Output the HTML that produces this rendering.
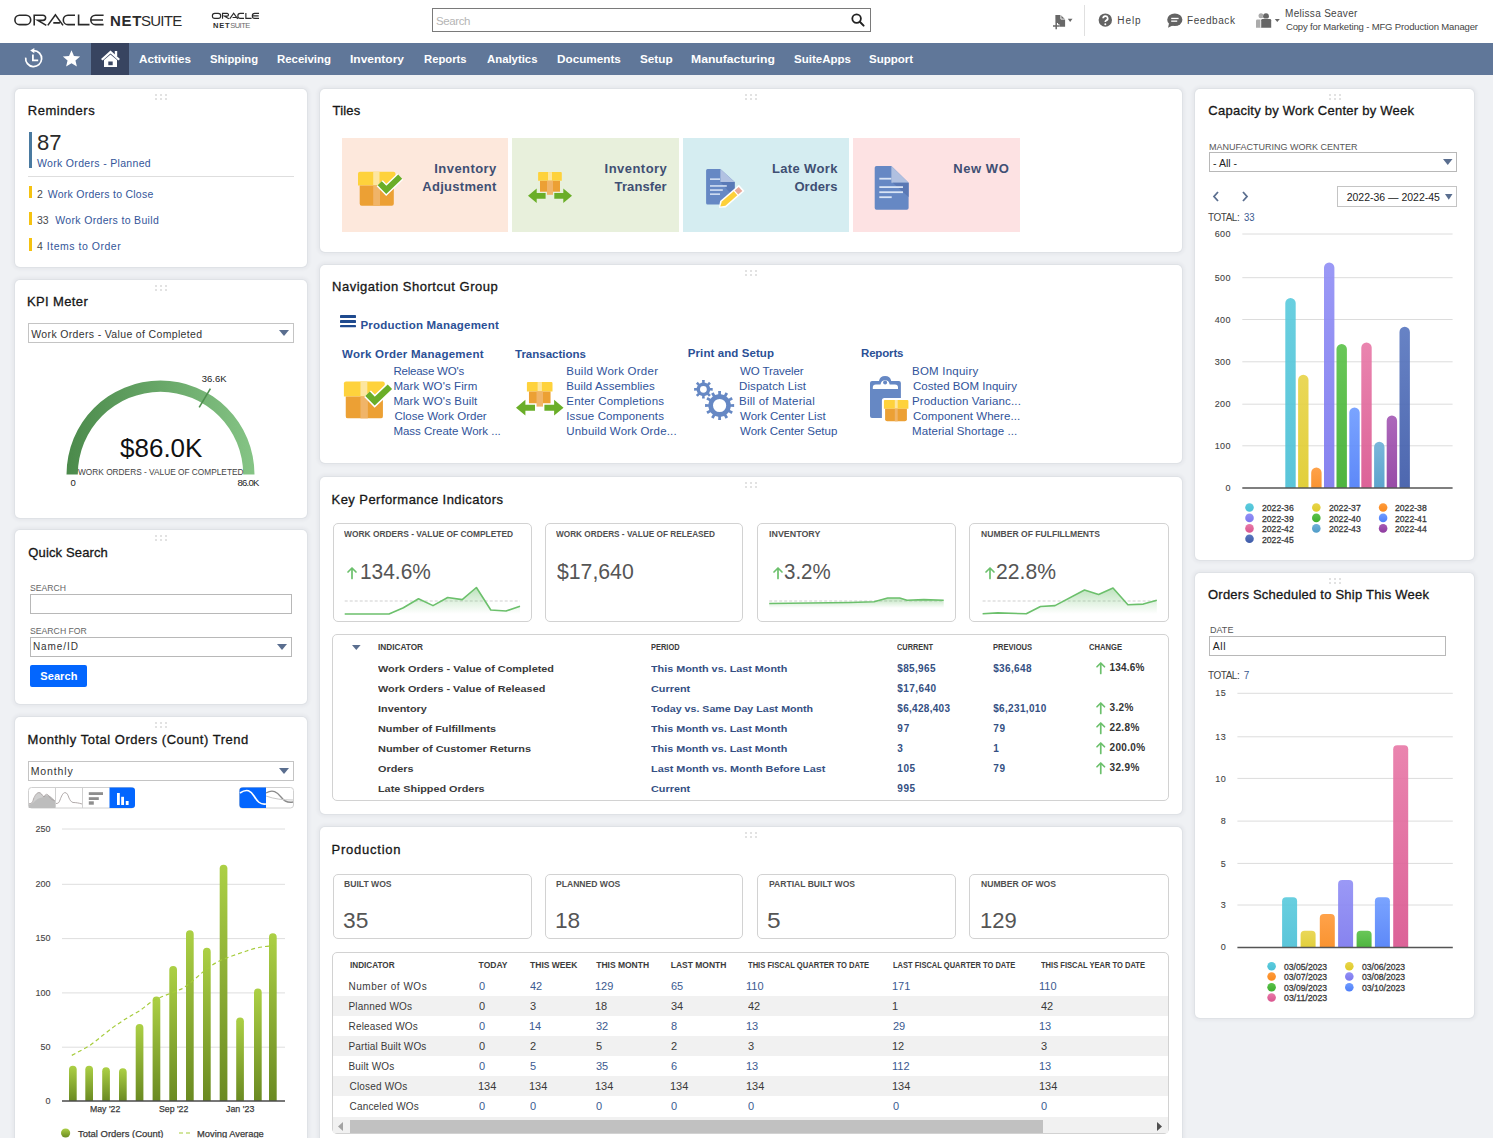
<!DOCTYPE html>
<html><head><meta charset="utf-8"><title>NetSuite Dashboard</title>
<style>
html,body{margin:0;padding:0;}
body{width:1493px;height:1138px;overflow:hidden;position:relative;background:#eff1f4;font-family:"Liberation Sans",sans-serif;}
.t{position:absolute;white-space:pre;line-height:1;}
.p{position:absolute;background:#fff;border-radius:5px;box-shadow:0 0 0 1px rgba(40,50,70,0.035),0 0 3px 3px rgba(40,50,70,0.04);}
.dot{position:absolute;width:2px;height:2px;background:#e2e2e2;}
svg{position:absolute;overflow:visible;}

</style></head><body>
<div style="position:absolute;left:0px;top:0px;width:1493px;height:43px;background:#fff"></div>
<svg style="left:0;top:0" width="300" height="43" viewBox="0 0 300 43"><path d="M19.6 15.2 H26 A4.7 4.7 0 0 1 26 24.6 H19.6 A4.7 4.7 0 0 1 19.6 15.2z M34.2 25.4 V15.2 H43 A2.6 2.6 0 0 1 43 20.4 H37.8 L46.3 25.4 M47.8 25.4 L55.4 14.9 L63 25.4 M53.3 22.9 H59.9 M75 15.2 H68 A4.7 4.7 0 0 0 68 24.6 H75 M78.6 14.4 V24.6 H89.5 M103.6 15.2 H95.5 A4.7 4.7 0 0 0 95.5 24.6 H103.6 M91.5 20 H103" fill="none" stroke="#2a2a2a" stroke-width="1.6"/><g transform="translate(212,13) scale(0.526) translate(-14.2,-14.4)"><path d="M19.6 15.2 H26 A4.7 4.7 0 0 1 26 24.6 H19.6 A4.7 4.7 0 0 1 19.6 15.2z M34.2 25.4 V15.2 H43 A2.6 2.6 0 0 1 43 20.4 H37.8 L46.3 25.4 M47.8 25.4 L55.4 14.9 L63 25.4 M53.3 22.9 H59.9 M75 15.2 H68 A4.7 4.7 0 0 0 68 24.6 H75 M78.6 14.4 V24.6 H89.5 M103.6 15.2 H95.5 A4.7 4.7 0 0 0 95.5 24.6 H103.6 M91.5 20 H103" fill="none" stroke="#2a2a2a" stroke-width="2.2"/></g></svg>
<div class="t" style="left:110.00px;top:13.30px;font-size:15px;font-weight:700;color:#2b2b2b;letter-spacing:0.750px;font-family:'Liberation Sans',sans-serif;">NET</div>
<div class="t" style="left:141.00px;top:13.30px;font-size:15px;font-weight:400;color:#2b2b2b;letter-spacing:-0.750px;font-family:'Liberation Sans',sans-serif;">SUITE</div>
<div class="t" style="left:213.00px;top:22.15px;font-size:7.5px;font-weight:700;color:#2e2e2e;letter-spacing:0.750px;font-family:'Liberation Sans',sans-serif;">NET</div>
<div class="t" style="left:230.20px;top:22.15px;font-size:7.5px;font-weight:400;color:#6a6a6a;letter-spacing:-0.500px;font-family:'Liberation Sans',sans-serif;">SUITE</div>
<div style="position:absolute;left:432px;top:8px;width:439px;height:24px;border:1px solid #7a7a7a;box-sizing:border-box;background:#fff"></div>
<div class="t" style="left:436.00px;top:15.77px;font-size:11.5px;font-weight:400;color:#b5b5b5;letter-spacing:-0.400px;font-family:'Liberation Sans',sans-serif;">Search</div>
<svg style="left:851px;top:13px" width="14" height="14" viewBox="0 0 14 14"><circle cx="5.6" cy="5.6" r="4.3" fill="none" stroke="#222" stroke-width="1.8"/><line x1="8.8" y1="8.8" x2="12.6" y2="12.6" stroke="#222" stroke-width="2" stroke-linecap="round"/></svg>
<svg style="left:1050px;top:12px" width="26" height="20" viewBox="1050 12 26 20"><path d="M1055.4 15 H1060.7 L1065.1 19.3 V26.8 H1055.4z" fill="#686868"/><path d="M1060.9 14.5 V19.1 H1065.6" fill="none" stroke="#fff" stroke-width="0.9"/><path d="M1053 26.1 H1059.4 M1056.2 23 V29.2" stroke="#fff" stroke-width="3.6"/><path d="M1053 26.1 H1059.4 M1056.2 23 V29.2" stroke="#686868" stroke-width="1.5"/><path d="M1067.8 18.7 H1072.5 L1070.15 22.1z" fill="#686868"/></svg>
<div style="position:absolute;left:1084px;top:5px;width:1px;height:31px;background:#e0e0e0"></div>
<svg style="left:1098px;top:13px" width="15" height="15" viewBox="0 0 15 15"><circle cx="7.3" cy="7.1" r="6.7" fill="#636363"/><path d="M5.1 5.3 A2.3 2.2 0 1 1 8.2 7.4 C7.4 7.8 7.3 8.2 7.3 9.1" fill="none" stroke="#fff" stroke-width="1.7"/><circle cx="7.3" cy="11.2" r="1" fill="#fff"/></svg>
<div class="t" style="left:1117.30px;top:16.04px;font-size:10px;font-weight:400;color:#454545;letter-spacing:0.933px;font-family:'Liberation Sans',sans-serif;">Help</div>
<svg style="left:1166px;top:13px" width="18" height="16" viewBox="0 0 18 16"><ellipse cx="8.8" cy="6.8" rx="7.6" ry="6.3" fill="#636363"/><path d="M3 10.5 L2 14.8 L7 12.2z" fill="#636363"/><rect x="5.2" y="4.8" width="7.4" height="1.3" fill="#fff"/><rect x="5.2" y="7.5" width="6" height="1.3" fill="#fff"/></svg>
<div class="t" style="left:1187.00px;top:16.04px;font-size:10px;font-weight:400;color:#454545;letter-spacing:0.571px;font-family:'Liberation Sans',sans-serif;">Feedback</div>
<svg style="left:1250px;top:5px" width="32" height="26" viewBox="1250 5 32 26"><circle cx="1261" cy="15.8" r="2.5" fill="#ababab"/><path d="M1256 27.8 V20.8 A1.4 1.4 0 0 1 1257.4 19.4 H1262 V27.8z" fill="#ababab"/><circle cx="1266" cy="16.2" r="3.1" fill="#fff"/><circle cx="1266" cy="16.2" r="2.9" fill="#666"/><path d="M1260.4 27.8 V20 A1.4 1.4 0 0 1 1261.8 18.6 H1270.6 A1.4 1.4 0 0 1 1272 20 V27.8z" fill="#fff"/><path d="M1261.2 27.8 V20.3 A1.2 1.2 0 0 1 1262.4 19.1 H1270 A1.2 1.2 0 0 1 1271.2 20.3 V27.8z" fill="#666"/><path d="M1274.8 19 H1279.8 L1277.3 22z" fill="#666"/></svg>
<div class="t" style="left:1285.00px;top:9.04px;font-size:10px;font-weight:400;color:#454545;letter-spacing:0.308px;font-family:'Liberation Sans',sans-serif;">Melissa Seaver</div>
<div class="t" style="left:1286.00px;top:22.26px;font-size:9.5px;font-weight:400;color:#454545;letter-spacing:-0.143px;font-family:'Liberation Sans',sans-serif;">Copy for Marketing - MFG Production Manager</div>
<div style="position:absolute;left:0px;top:43px;width:1493px;height:32px;background:#607799"></div>
<div style="position:absolute;left:91px;top:43px;width:38px;height:32px;background:#384460"></div>
<svg style="left:24px;top:47px" width="20" height="22" viewBox="0 0 20 22"><path d="M9.8 3.6 A8 8 0 1 1 1.7 10.6" fill="none" stroke="#fff" stroke-width="1.7"/><path d="M6.2 3.6 L10.3 0.9 V6.3z" fill="#fff"/><path d="M8.9 7.6 V13.3 H14.2" fill="none" stroke="#fff" stroke-width="1.8"/></svg>
<svg style="left:61.5px;top:49.3px" width="19" height="19" viewBox="0 0 24 24"><path d="M12 1.5l3.1 7.2 7.8.7-5.9 5.1 1.8 7.6L12 18.1 5.2 22.1 7 14.5 1.1 9.4l7.8-.7z" fill="#fff"/></svg>
<svg style="left:100px;top:49px" width="21" height="19" viewBox="0 0 21 19"><path d="M10.5 1.5 L1 10 L2.6 11.6 L10.5 4.6 L18.4 11.6 L20 10z" fill="#fff"/><path d="M4 11 L10.5 5.5 L17 11 V18 H4z" fill="#fff"/><rect x="8.3" y="12.5" width="4.4" height="3.7" fill="#384460"/><rect x="14.8" y="2" width="2.4" height="5" fill="#fff"/></svg>
<div class="t" style="left:139.00px;top:54.19px;font-size:11px;font-weight:700;color:#fff;letter-spacing:0.000px;font-family:'Liberation Sans',sans-serif;transform:scaleX(1.0612);transform-origin:0 0;">Activities</div>
<div class="t" style="left:210.00px;top:54.19px;font-size:11px;font-weight:700;color:#fff;letter-spacing:0.000px;font-family:'Liberation Sans',sans-serif;transform:scaleX(1.0213);transform-origin:0 0;">Shipping</div>
<div class="t" style="left:277.00px;top:54.19px;font-size:11px;font-weight:700;color:#fff;letter-spacing:0.000px;font-family:'Liberation Sans',sans-serif;transform:scaleX(1.0385);transform-origin:0 0;">Receiving</div>
<div class="t" style="left:350.00px;top:54.19px;font-size:11px;font-weight:700;color:#fff;letter-spacing:0.000px;font-family:'Liberation Sans',sans-serif;transform:scaleX(1.0900);transform-origin:0 0;">Inventory</div>
<div class="t" style="left:424.00px;top:54.19px;font-size:11px;font-weight:700;color:#fff;letter-spacing:0.000px;font-family:'Liberation Sans',sans-serif;transform:scaleX(1.0238);transform-origin:0 0;">Reports</div>
<div class="t" style="left:487.00px;top:54.19px;font-size:11px;font-weight:700;color:#fff;letter-spacing:0.000px;font-family:'Liberation Sans',sans-serif;transform:scaleX(1.0327);transform-origin:0 0;">Analytics</div>
<div class="t" style="left:557.00px;top:54.19px;font-size:11px;font-weight:700;color:#fff;letter-spacing:0.000px;font-family:'Liberation Sans',sans-serif;transform:scaleX(1.0667);transform-origin:0 0;">Documents</div>
<div class="t" style="left:640.00px;top:54.19px;font-size:11px;font-weight:700;color:#fff;letter-spacing:0.000px;font-family:'Liberation Sans',sans-serif;transform:scaleX(1.0667);transform-origin:0 0;">Setup</div>
<div class="t" style="left:691.00px;top:54.19px;font-size:11px;font-weight:700;color:#fff;letter-spacing:0.000px;font-family:'Liberation Sans',sans-serif;transform:scaleX(1.1067);transform-origin:0 0;">Manufacturing</div>
<div class="t" style="left:793.50px;top:54.19px;font-size:11px;font-weight:700;color:#fff;letter-spacing:0.000px;font-family:'Liberation Sans',sans-serif;transform:scaleX(1.0463);transform-origin:0 0;">SuiteApps</div>
<div class="t" style="left:869.00px;top:54.19px;font-size:11px;font-weight:700;color:#fff;letter-spacing:0.000px;font-family:'Liberation Sans',sans-serif;transform:scaleX(1.0476);transform-origin:0 0;">Support</div>
<div class="p" style="left:15px;top:89px;width:292px;height:178px"></div>
<div class="dot" style="left:155.0px;top:94.0px"></div>
<div class="dot" style="left:155.0px;top:97.5px"></div>
<div class="dot" style="left:160.0px;top:94.0px"></div>
<div class="dot" style="left:160.0px;top:97.5px"></div>
<div class="dot" style="left:165.0px;top:94.0px"></div>
<div class="dot" style="left:165.0px;top:97.5px"></div>
<div class="p" style="left:15px;top:280px;width:292px;height:238px"></div>
<div class="dot" style="left:155.0px;top:285.0px"></div>
<div class="dot" style="left:155.0px;top:288.5px"></div>
<div class="dot" style="left:160.0px;top:285.0px"></div>
<div class="dot" style="left:160.0px;top:288.5px"></div>
<div class="dot" style="left:165.0px;top:285.0px"></div>
<div class="dot" style="left:165.0px;top:288.5px"></div>
<div class="p" style="left:15px;top:530px;width:292px;height:174px"></div>
<div class="dot" style="left:155.0px;top:535.0px"></div>
<div class="dot" style="left:155.0px;top:538.5px"></div>
<div class="dot" style="left:160.0px;top:535.0px"></div>
<div class="dot" style="left:160.0px;top:538.5px"></div>
<div class="dot" style="left:165.0px;top:535.0px"></div>
<div class="dot" style="left:165.0px;top:538.5px"></div>
<div class="p" style="left:15px;top:717px;width:292px;height:443px"></div>
<div class="dot" style="left:155.0px;top:722.0px"></div>
<div class="dot" style="left:155.0px;top:725.5px"></div>
<div class="dot" style="left:160.0px;top:722.0px"></div>
<div class="dot" style="left:160.0px;top:725.5px"></div>
<div class="dot" style="left:165.0px;top:722.0px"></div>
<div class="dot" style="left:165.0px;top:725.5px"></div>
<div class="p" style="left:320px;top:89px;width:862px;height:163px"></div>
<div class="dot" style="left:745.0px;top:94.0px"></div>
<div class="dot" style="left:745.0px;top:97.5px"></div>
<div class="dot" style="left:750.0px;top:94.0px"></div>
<div class="dot" style="left:750.0px;top:97.5px"></div>
<div class="dot" style="left:755.0px;top:94.0px"></div>
<div class="dot" style="left:755.0px;top:97.5px"></div>
<div class="p" style="left:320px;top:265px;width:862px;height:198px"></div>
<div class="dot" style="left:745.0px;top:270.0px"></div>
<div class="dot" style="left:745.0px;top:273.5px"></div>
<div class="dot" style="left:750.0px;top:270.0px"></div>
<div class="dot" style="left:750.0px;top:273.5px"></div>
<div class="dot" style="left:755.0px;top:270.0px"></div>
<div class="dot" style="left:755.0px;top:273.5px"></div>
<div class="p" style="left:320px;top:477px;width:862px;height:337px"></div>
<div class="dot" style="left:745.0px;top:482.0px"></div>
<div class="dot" style="left:745.0px;top:485.5px"></div>
<div class="dot" style="left:750.0px;top:482.0px"></div>
<div class="dot" style="left:750.0px;top:485.5px"></div>
<div class="dot" style="left:755.0px;top:482.0px"></div>
<div class="dot" style="left:755.0px;top:485.5px"></div>
<div class="p" style="left:320px;top:827px;width:862px;height:333px"></div>
<div class="dot" style="left:745.0px;top:832.0px"></div>
<div class="dot" style="left:745.0px;top:835.5px"></div>
<div class="dot" style="left:750.0px;top:832.0px"></div>
<div class="dot" style="left:750.0px;top:835.5px"></div>
<div class="dot" style="left:755.0px;top:832.0px"></div>
<div class="dot" style="left:755.0px;top:835.5px"></div>
<div class="p" style="left:1195px;top:89px;width:279px;height:471px"></div>
<div class="dot" style="left:1328.5px;top:94.0px"></div>
<div class="dot" style="left:1328.5px;top:97.5px"></div>
<div class="dot" style="left:1333.5px;top:94.0px"></div>
<div class="dot" style="left:1333.5px;top:97.5px"></div>
<div class="dot" style="left:1338.5px;top:94.0px"></div>
<div class="dot" style="left:1338.5px;top:97.5px"></div>
<div class="p" style="left:1195px;top:573px;width:279px;height:445px"></div>
<div class="dot" style="left:1328.5px;top:578.0px"></div>
<div class="dot" style="left:1328.5px;top:581.5px"></div>
<div class="dot" style="left:1333.5px;top:578.0px"></div>
<div class="dot" style="left:1333.5px;top:581.5px"></div>
<div class="dot" style="left:1338.5px;top:578.0px"></div>
<div class="dot" style="left:1338.5px;top:581.5px"></div>
<div class="t" style="left:27.80px;top:103.80px;font-size:13px;font-weight:400;color:#161616;letter-spacing:0.500px;font-family:'Liberation Sans',sans-serif;-webkit-text-stroke:0.3px #161616;">Reminders</div>
<div style="position:absolute;left:29px;top:132px;width:3px;height:36px;background:#4a7aa0"></div>
<div class="t" style="left:36.57px;top:132.90px;font-size:21.5px;font-weight:400;color:#2a2a2a;letter-spacing:0.000px;font-family:'Liberation Sans',sans-serif;transform:scaleX(1.0273);transform-origin:0 0;">87</div>
<div class="t" style="left:37.00px;top:158.31px;font-size:10.5px;font-weight:400;color:#33569a;letter-spacing:0.325px;font-family:'Liberation Sans',sans-serif;">Work Orders - Planned</div>
<div style="position:absolute;left:28px;top:176px;width:266px;height:1px;background:#dedede"></div>
<div style="position:absolute;left:29px;top:186px;width:3px;height:12px;background:#f5c211"></div>
<div class="t" style="left:37.00px;top:188.91px;font-size:10.5px;font-weight:400;color:#4a4a4a;letter-spacing:0.000px;font-family:'Liberation Sans',sans-serif;">2</div>
<div class="t" style="left:47.80px;top:188.91px;font-size:10.5px;font-weight:400;color:#33569a;letter-spacing:0.247px;font-family:'Liberation Sans',sans-serif;">Work Orders to Close</div>
<div style="position:absolute;left:29px;top:212px;width:3px;height:13px;background:#f5c211"></div>
<div class="t" style="left:37.00px;top:214.61px;font-size:10.5px;font-weight:400;color:#4a4a4a;letter-spacing:0.000px;font-family:'Liberation Sans',sans-serif;">33</div>
<div class="t" style="left:55.30px;top:214.61px;font-size:10.5px;font-weight:400;color:#33569a;letter-spacing:0.326px;font-family:'Liberation Sans',sans-serif;">Work Orders to Build</div>
<div style="position:absolute;left:29px;top:238px;width:3px;height:13px;background:#f5c211"></div>
<div class="t" style="left:37.00px;top:240.81px;font-size:10.5px;font-weight:400;color:#4a4a4a;letter-spacing:0.000px;font-family:'Liberation Sans',sans-serif;">4</div>
<div class="t" style="left:46.80px;top:240.81px;font-size:10.5px;font-weight:400;color:#33569a;letter-spacing:0.523px;font-family:'Liberation Sans',sans-serif;">Items to Order</div>
<div class="t" style="left:27.00px;top:294.70px;font-size:13px;font-weight:400;color:#161616;letter-spacing:0.375px;font-family:'Liberation Sans',sans-serif;-webkit-text-stroke:0.3px #161616;">KPI Meter</div>
<div style="position:absolute;left:28px;top:323px;width:266px;height:20px;border:1px solid #c4c4c4;box-sizing:border-box;background:#fff"></div>
<div class="t" style="left:31.30px;top:328.61px;font-size:10.5px;font-weight:400;color:#333;letter-spacing:0.345px;font-family:'Liberation Sans',sans-serif;">Work Orders - Value of Completed</div>
<svg style="left:279px;top:330px" width="10" height="6" viewBox="0 0 10 6"><path d="M0 0H10L5 6z" fill="#5a6e8f"/></svg>
<svg style="left:0;top:0" width="320" height="520" viewBox="0 0 320 520">
<defs><linearGradient id="gg" x1="66.5" y1="0" x2="254.5" y2="0" gradientUnits="userSpaceOnUse"><stop offset="0" stop-color="#4b8a4b"/><stop offset="1" stop-color="#85c485"/></linearGradient></defs>
<path d="M66.5 474.5 A94 94 0 0 1 254.5 474.5 L243.2 474.5 A82.7 82.7 0 0 0 77.8 474.5z" fill="url(#gg)"/>
<line x1="199.2" y1="407.4" x2="210.4" y2="388.6" stroke="#4f8f4f" stroke-width="1.6"/>
</svg>
<div class="t" style="left:201.70px;top:374.46px;font-size:9.5px;font-weight:400;color:#222;letter-spacing:0.000px;font-family:'Liberation Sans',sans-serif;">36.6K</div>
<div class="t" style="left:120.00px;top:435.09px;font-size:26px;font-weight:400;color:#111;letter-spacing:0.000px;font-family:'Liberation Sans',sans-serif;transform:scaleX(1.0000);transform-origin:0 0;">$86.0K</div>
<div class="t" style="left:77.70px;top:467.20px;font-size:9.8px;font-weight:400;color:#444;letter-spacing:0.000px;font-family:'Liberation Sans',sans-serif;transform:scaleX(0.8477);transform-origin:0 0;">WORK ORDERS - VALUE OF COMPLETED</div>
<div class="t" style="left:70.40px;top:478.46px;font-size:9.5px;font-weight:400;color:#222;letter-spacing:0.000px;font-family:'Liberation Sans',sans-serif;">0</div>
<div class="t" style="left:237.50px;top:478.46px;font-size:9.5px;font-weight:400;color:#222;letter-spacing:-0.750px;font-family:'Liberation Sans',sans-serif;">86.0K</div>
<div class="t" style="left:28.30px;top:545.70px;font-size:13px;font-weight:400;color:#161616;letter-spacing:0.136px;font-family:'Liberation Sans',sans-serif;-webkit-text-stroke:0.3px #161616;">Quick Search</div>
<div class="t" style="left:29.60px;top:583.16px;font-size:9.5px;font-weight:400;color:#666;letter-spacing:0.000px;font-family:'Liberation Sans',sans-serif;transform:scaleX(0.9077);transform-origin:0 0;">SEARCH</div>
<div style="position:absolute;left:30px;top:594px;width:262px;height:20px;border:1px solid #b8b8b8;box-sizing:border-box;background:#fff"></div>
<div class="t" style="left:29.60px;top:626.46px;font-size:9.5px;font-weight:400;color:#666;letter-spacing:0.000px;font-family:'Liberation Sans',sans-serif;transform:scaleX(0.9129);transform-origin:0 0;">SEARCH FOR</div>
<div style="position:absolute;left:30px;top:637px;width:262px;height:20px;border:1px solid #b8b8b8;box-sizing:border-box;background:#fff"></div>
<div class="t" style="left:33.00px;top:642.43px;font-size:10px;font-weight:400;color:#333;letter-spacing:0.900px;font-family:'Liberation Sans',sans-serif;">Name/ID</div>
<svg style="left:277px;top:644px" width="10" height="6" viewBox="0 0 10 6"><path d="M0 0H10L5 6z" fill="#5a6e8f"/></svg>
<div style="position:absolute;left:30px;top:665px;width:57px;height:22px;background:#0366fe;border-radius:2px"></div>
<div class="t" style="left:40.30px;top:670.89px;font-size:11px;font-weight:700;color:#fff;letter-spacing:0.080px;font-family:'Liberation Sans',sans-serif;">Search</div>
<div class="t" style="left:27.60px;top:733.10px;font-size:13px;font-weight:400;color:#161616;letter-spacing:0.521px;font-family:'Liberation Sans',sans-serif;-webkit-text-stroke:0.3px #161616;">Monthly Total Orders (Count) Trend</div>
<div style="position:absolute;left:28px;top:761px;width:266px;height:20px;border:1px solid #c4c4c4;box-sizing:border-box;background:#fff"></div>
<div class="t" style="left:30.70px;top:766.31px;font-size:10.5px;font-weight:400;color:#333;letter-spacing:0.867px;font-family:'Liberation Sans',sans-serif;">Monthly</div>
<svg style="left:279px;top:768px" width="10" height="6" viewBox="0 0 10 6"><path d="M0 0H10L5 6z" fill="#5a6e8f"/></svg>
<svg style="left:28px;top:787px" width="108" height="22" viewBox="0 0 108 22">
<rect x="0.5" y="0.5" width="106" height="20.5" rx="3" fill="#fff" stroke="#d0d0d0"/>
<path d="M0.8 21 V17 C3 16 4 17 5 14 C7 9 8.5 5.3 11 5.3 C13 5.3 14 8 15.5 10 C17 7.5 18.5 7 20 8.5 C21.5 10 22.5 12.5 24 13 C25 13.5 26 13.5 27 14.5 V21z" fill="#cfcfcf"/>
<path d="M0.8 21 V18 C3 17.5 5 16 7 14 C9 12 11 11 14 10.5 C17 9 19 8 21 8.5 C23 9.5 26 12 27 14 V21z" fill="#bdbdbd"/>
<path d="M1 16.5 C3 17 4.5 16 5.5 12 C7 8 9 5.6 11 5.6 C13 5.6 14 8 16 10 C17.5 7 19 6.5 20.5 8.5 C22 10.5 23 12.5 25 13 C26 13.2 26.8 13.8 27 14" fill="none" stroke="#a8a0a0" stroke-width="0.9"/>
<line x1="27.5" y1="0.5" x2="27.5" y2="21" stroke="#d0d0d0"/>
<path d="M28 16.5 C30 16.5 31 16 32 13 C33.5 9 35 5.6 37 5.6 C39 5.6 40 8 41 11 C42 13 43 15 45 15.5 C48 15.5 51 16 54 17" fill="none" stroke="#a8a0a0" stroke-width="0.9"/>
<line x1="54.5" y1="0.5" x2="54.5" y2="21" stroke="#d0d0d0"/>
<rect x="60.8" y="5.2" width="14.2" height="2.8" fill="#8e8e8e"/><rect x="60.8" y="10.2" width="10" height="2.8" fill="#8e8e8e"/><rect x="60.8" y="14.3" width="5" height="3.4" fill="#8e8e8e"/>
<path d="M81.5 0.5 H104 A3 3 0 0 1 107 3.5 V18 A3 3 0 0 1 104 21 H81.5z" fill="#0366fe"/>
<rect x="89" y="6" width="2.8" height="12" fill="#fff"/><rect x="93.2" y="9.8" width="2.8" height="8.2" fill="#fff"/><rect x="97.8" y="14" width="2.8" height="4" fill="#fff"/>
</svg>
<svg style="left:239px;top:787px" width="56" height="22" viewBox="0 0 56 22">
<rect x="0.5" y="0.5" width="54" height="20.5" rx="3" fill="#fff" stroke="#d0d0d0"/>
<path d="M3.5 0.5 H27 V21 H3.5 A3 3 0 0 1 0.5 18 V3.5 A3 3 0 0 1 3.5 0.5z" fill="#0366fe"/>
<path d="M1 6 C8 1 12 4 15 9 C18 14 21 18 27 17" fill="none" stroke="#fff" stroke-width="1.6"/>
<path d="M27 6 C34 2 38 5 42 10 C45 14 49 16 54 15" fill="none" stroke="#8a8a8a" stroke-width="1.3"/>
<path d="M27 9 C35 12 44 13 54 13" fill="none" stroke="#c8c8c8" stroke-width="1"/>
</svg>
<svg style="left:0;top:0" width="320" height="1138" viewBox="0 0 320 1138"><defs><linearGradient id="bg1" x1="0" y1="0" x2="0" y2="1"><stop offset="0" stop-color="#acd045"/><stop offset="1" stop-color="#6a8a22"/></linearGradient></defs><line x1="62" y1="829" x2="285" y2="829" stroke="#dedede" stroke-width="1"/><line x1="62" y1="884.3" x2="285" y2="884.3" stroke="#dedede" stroke-width="1"/><line x1="62" y1="938.6" x2="285" y2="938.6" stroke="#dedede" stroke-width="1"/><line x1="62" y1="992.9" x2="285" y2="992.9" stroke="#dedede" stroke-width="1"/><line x1="62" y1="1047.2" x2="285" y2="1047.2" stroke="#dedede" stroke-width="1"/><path d="M69 1101 V1069.5 A3.85 3.85 0 0 1 76.7 1069.5 V1101z" fill="url(#bg1)"/><path d="M85.3 1101 V1069.5 A3.85 3.85 0 0 1 93.0 1069.5 V1101z" fill="url(#bg1)"/><path d="M102.2 1101 V1071.2 A3.85 3.85 0 0 1 109.9 1071.2 V1101z" fill="url(#bg1)"/><path d="M119 1101 V1072.1 A3.85 3.85 0 0 1 126.7 1072.1 V1101z" fill="url(#bg1)"/><path d="M135.7 1101 V1027.8 A3.85 3.85 0 0 1 143.39999999999998 1027.8 V1101z" fill="url(#bg1)"/><path d="M152.6 1101 V1000.3 A3.85 3.85 0 0 1 160.29999999999998 1000.3 V1101z" fill="url(#bg1)"/><path d="M169.3 1101 V969.8 A3.85 3.85 0 0 1 177.0 969.8 V1101z" fill="url(#bg1)"/><path d="M186 1101 V934.0999999999999 A3.85 3.85 0 0 1 193.7 934.0999999999999 V1101z" fill="url(#bg1)"/><path d="M203 1101 V951.6999999999999 A3.85 3.85 0 0 1 210.7 951.6999999999999 V1101z" fill="url(#bg1)"/><path d="M219.7 1101 V868.5 A3.85 3.85 0 0 1 227.39999999999998 868.5 V1101z" fill="url(#bg1)"/><path d="M236.2 1101 V1021.3 A3.85 3.85 0 0 1 243.89999999999998 1021.3 V1101z" fill="url(#bg1)"/><path d="M254 1101 V992.4 A3.85 3.85 0 0 1 261.7 992.4 V1101z" fill="url(#bg1)"/><path d="M269 1101 V937.0999999999999 A3.85 3.85 0 0 1 276.7 937.0999999999999 V1101z" fill="url(#bg1)"/><line x1="62" y1="1101" x2="285" y2="1101" stroke="#4a4a4a" stroke-width="1.5"/><path d="M71.8 1055.4 C78 1052 84 1049 90 1045.4 C100 1038 110 1029 117.9 1024 C125 1019 132 1015 139.3 1011 C145 1007 150 1002 156.5 999.3 C165 995 175 992 182.2 988.6 C190 984 197 977 203.6 971.4 C210 966 218 961 225 958.6 C232 956 240 953 246.5 951 C255 948 265 946 274.3 945.7" fill="none" stroke="#a6cc3c" stroke-width="1.2" stroke-dasharray="4 3"/><circle cx="65.6" cy="1133" r="4.6" fill="url(#bg1)"/><line x1="179" y1="1133" x2="191" y2="1133" stroke="#a6cc3c" stroke-width="1.2" stroke-dasharray="4 3"/></svg>
<div class="t" style="left:35.40px;top:824.88px;font-size:9px;font-weight:400;color:#444;letter-spacing:0.000px;font-family:'Liberation Sans',sans-serif;-webkit-text-stroke:0.1px #444;">250</div>
<div class="t" style="left:35.40px;top:880.18px;font-size:9px;font-weight:400;color:#444;letter-spacing:0.000px;font-family:'Liberation Sans',sans-serif;-webkit-text-stroke:0.1px #444;">200</div>
<div class="t" style="left:35.40px;top:934.48px;font-size:9px;font-weight:400;color:#444;letter-spacing:0.000px;font-family:'Liberation Sans',sans-serif;-webkit-text-stroke:0.1px #444;">150</div>
<div class="t" style="left:35.40px;top:988.78px;font-size:9px;font-weight:400;color:#444;letter-spacing:0.000px;font-family:'Liberation Sans',sans-serif;-webkit-text-stroke:0.1px #444;">100</div>
<div class="t" style="left:40.40px;top:1043.08px;font-size:9px;font-weight:400;color:#444;letter-spacing:0.000px;font-family:'Liberation Sans',sans-serif;-webkit-text-stroke:0.1px #444;">50</div>
<div class="t" style="left:45.40px;top:1097.08px;font-size:9px;font-weight:400;color:#444;letter-spacing:0.000px;font-family:'Liberation Sans',sans-serif;-webkit-text-stroke:0.1px #444;">0</div>
<div class="t" style="left:90.40px;top:1104.26px;font-size:9.5px;font-weight:400;color:#3a3a3a;letter-spacing:0.000px;font-family:'Liberation Sans',sans-serif;transform:scaleX(0.9182);transform-origin:0 0;-webkit-text-stroke:0.25px #3a3a3a;">May '22</div>
<div class="t" style="left:158.60px;top:1104.26px;font-size:9.5px;font-weight:400;color:#3a3a3a;letter-spacing:0.000px;font-family:'Liberation Sans',sans-serif;transform:scaleX(0.9187);transform-origin:0 0;-webkit-text-stroke:0.25px #3a3a3a;">Sep '22</div>
<div class="t" style="left:226.00px;top:1104.26px;font-size:9.5px;font-weight:400;color:#3a3a3a;letter-spacing:0.000px;font-family:'Liberation Sans',sans-serif;transform:scaleX(0.9333);transform-origin:0 0;-webkit-text-stroke:0.25px #3a3a3a;">Jan '23</div>
<div class="t" style="left:77.60px;top:1129.46px;font-size:9.5px;font-weight:400;color:#3a3a3a;letter-spacing:0.000px;font-family:'Liberation Sans',sans-serif;transform:scaleX(0.9930);transform-origin:0 0;-webkit-text-stroke:0.25px #3a3a3a;">Total Orders (Count)</div>
<div class="t" style="left:197.20px;top:1129.46px;font-size:9.5px;font-weight:400;color:#3a3a3a;letter-spacing:0.000px;font-family:'Liberation Sans',sans-serif;transform:scaleX(0.9824);transform-origin:0 0;-webkit-text-stroke:0.25px #3a3a3a;">Moving Average</div>
<div class="t" style="left:332.60px;top:104.00px;font-size:13px;font-weight:400;color:#161616;letter-spacing:0.175px;font-family:'Liberation Sans',sans-serif;-webkit-text-stroke:0.3px #161616;">Tiles</div>
<div style="position:absolute;left:342px;top:138px;width:166px;height:94px;background:#fde8dc"></div>
<div style="position:absolute;left:512px;top:138px;width:167px;height:94px;background:#e8f0dc"></div>
<div style="position:absolute;left:683px;top:138px;width:166px;height:94px;background:#d5edf1"></div>
<div style="position:absolute;left:853px;top:138px;width:167px;height:94px;background:#fde2e3"></div>
<div class="t" style="left:434.30px;top:162.30px;font-size:13px;font-weight:700;color:#3f4f73;letter-spacing:0.438px;font-family:'Liberation Sans',sans-serif;">Inventory</div>
<div class="t" style="left:422.30px;top:180.10px;font-size:13px;font-weight:700;color:#3f4f73;letter-spacing:0.278px;font-family:'Liberation Sans',sans-serif;">Adjustment</div>
<div class="t" style="left:604.60px;top:162.30px;font-size:13px;font-weight:700;color:#3f4f73;letter-spacing:0.463px;font-family:'Liberation Sans',sans-serif;">Inventory</div>
<div class="t" style="left:614.60px;top:180.10px;font-size:13px;font-weight:700;color:#3f4f73;letter-spacing:0.100px;font-family:'Liberation Sans',sans-serif;">Transfer</div>
<div class="t" style="left:772.00px;top:162.30px;font-size:13px;font-weight:700;color:#3f4f73;letter-spacing:0.350px;font-family:'Liberation Sans',sans-serif;">Late Work</div>
<div class="t" style="left:794.40px;top:180.10px;font-size:13px;font-weight:700;color:#3f4f73;letter-spacing:0.080px;font-family:'Liberation Sans',sans-serif;">Orders</div>
<div class="t" style="left:953.20px;top:162.30px;font-size:13px;font-weight:700;color:#3f4f73;letter-spacing:0.580px;font-family:'Liberation Sans',sans-serif;">New WO</div>
<svg style="left:0;top:0" width="1200" height="1138" viewBox="0 0 1200 1138"><g transform="translate(358,171.8) scale(1)">
<path d="M2 0H35.5A2 2 0 0 1 37.5 2V13.8H0V2A2 2 0 0 1 2 0z" fill="#fed23c"/>
<rect x="15.2" y="0" width="6.3" height="13.8" fill="#fde6a0"/>
<path d="M1.7 13.8H35.8V31.9A2 2 0 0 1 33.8 33.9H3.7A2 2 0 0 1 1.7 31.9z" fill="#eca034"/>
<rect x="15.2" y="13.8" width="6.8" height="20.1" fill="#f0b468"/>
<path d="M21.7 11.4 L28.3 18.1 L42.2 4.9" fill="none" stroke="#fff" stroke-width="8.6" stroke-linejoin="miter"/>
<path d="M21.7 11.4 L28.3 18.1 L42.2 4.9" fill="none" stroke="#6aae28" stroke-width="5.8" stroke-linejoin="miter"/>
</g><g transform="translate(528,172.1) scale(1)">
<path d="M11 0H32.8A1 1 0 0 1 33.8 1V8.7H10.1V1A1 1 0 0 1 11 0z" fill="#fed23c"/>
<rect x="20" y="0" width="4" height="8.7" fill="#fde6a0"/>
<rect x="12" y="8.7" width="20" height="10.9" fill="#eca034"/>
<rect x="19" y="8.7" width="6" height="14" fill="#f0b468"/>
<path d="M0 23.7 L8.7 16.4 V21 H17.6 V26.6 H8.7 V30.9z" fill="#6aae28"/>
<path d="M44 23.7 L35.3 16.4 V21 H26.3 V26.6 H35.3 V30.9z" fill="#6aae28"/>
</g><g transform="translate(706.1,168.9) scale(1)">
<path d="M1.5 0H14.3L28.6 13.1V22.5L15.5 35.6H1.5A1.5 1.5 0 0 1 0 34.1V1.5A1.5 1.5 0 0 1 1.5 0z" fill="#6688c4"/>
<path d="M14.3 0L28.6 13.1H14.3z" fill="#b2c2e2"/>
<path d="M14.3 13.1H28.6V21.5L25 25z" fill="#5676b4" opacity="0.8"/>
<rect x="3.9" y="9.5" width="10" height="1.5" fill="#d9e4f5"/>
<rect x="3.9" y="16.3" width="16.8" height="1.5" fill="#d9e4f5"/>
<rect x="3.9" y="20.4" width="12.8" height="1.5" fill="#d9e4f5"/>
<rect x="3.9" y="24.5" width="10" height="1.5" fill="#d9e4f5"/>
<g transform="translate(14.2,37.6) rotate(-41)">
<path d="M-1.8 0 L3.4 -4.2 H28.4 V4.2 H3.4z" fill="#fff"/>
<path d="M0 0 L4.4 -2.7 H20.2 V2.7 H4.4z" fill="#fdd03a"/>
<rect x="21.4" y="-2.7" width="5.4" height="5.4" fill="#e9a99a"/>
</g>
</g><g transform="translate(874.7,166) scale(1)">
<path d="M1.8 0H16.7L33.9 16.7V42A1.8 1.8 0 0 1 32.1 43.8H1.8A1.8 1.8 0 0 1 0 42V1.8A1.8 1.8 0 0 1 1.8 0z" fill="#6688c4"/>
<path d="M16.7 0L33.9 16.7H16.7z" fill="#b0c0e0"/>
<path d="M18 16.7H33.9V31z" fill="#5a78b4"/>
<rect x="4.6" y="11.8" width="12" height="1.8" fill="#d9e4f5"/>
<rect x="4.6" y="20.2" width="23.7" height="1.8" fill="#d9e4f5"/>
<rect x="4.6" y="25.3" width="23.7" height="1.8" fill="#d9e4f5"/>
<rect x="4.6" y="30.3" width="12.4" height="1.8" fill="#d9e4f5"/>
</g><g transform="translate(343.9,381.4) scale(1.09)">
<path d="M2 0H35.5A2 2 0 0 1 37.5 2V13.8H0V2A2 2 0 0 1 2 0z" fill="#fed23c"/>
<rect x="15.2" y="0" width="6.3" height="13.8" fill="#fde6a0"/>
<path d="M1.7 13.8H35.8V31.9A2 2 0 0 1 33.8 33.9H3.7A2 2 0 0 1 1.7 31.9z" fill="#eca034"/>
<rect x="15.2" y="13.8" width="6.8" height="20.1" fill="#f0b468"/>
<path d="M21.7 11.4 L28.3 18.1 L42.2 4.9" fill="none" stroke="#fff" stroke-width="8.6" stroke-linejoin="miter"/>
<path d="M21.7 11.4 L28.3 18.1 L42.2 4.9" fill="none" stroke="#6aae28" stroke-width="5.8" stroke-linejoin="miter"/>
</g><g transform="translate(516,382.1) scale(1.08)">
<path d="M11 0H32.8A1 1 0 0 1 33.8 1V8.7H10.1V1A1 1 0 0 1 11 0z" fill="#fed23c"/>
<rect x="20" y="0" width="4" height="8.7" fill="#fde6a0"/>
<rect x="12" y="8.7" width="20" height="10.9" fill="#eca034"/>
<rect x="19" y="8.7" width="6" height="14" fill="#f0b468"/>
<path d="M0 23.7 L8.7 16.4 V21 H17.6 V26.6 H8.7 V30.9z" fill="#6aae28"/>
<path d="M44 23.7 L35.3 16.4 V21 H26.3 V26.6 H35.3 V30.9z" fill="#6aae28"/>
</g><path d="M718.13 394.30 L718.27 394.28 L718.17 390.97 L721.03 390.97 L720.93 394.28 L723.92 395.06 L724.06 395.12 L725.63 392.20 L728.10 393.63 L726.36 396.45 L728.56 398.62 L728.65 398.74 L731.47 397.00 L732.90 399.47 L729.98 401.04 L730.80 404.03 L730.82 404.17 L734.13 404.07 L734.13 406.93 L730.82 406.83 L730.04 409.82 L729.98 409.96 L732.90 411.53 L731.47 414.00 L728.65 412.26 L726.48 414.46 L726.36 414.55 L728.10 417.37 L725.63 418.80 L724.06 415.88 L721.07 416.70 L720.93 416.72 L721.03 420.03 L718.17 420.03 L718.27 416.72 L715.28 415.94 L715.14 415.88 L713.57 418.80 L711.10 417.37 L712.84 414.55 L710.64 412.38 L710.55 412.26 L707.73 414.00 L706.30 411.53 L709.22 409.96 L708.40 406.97 L708.38 406.83 L705.07 406.93 L705.07 404.07 L708.38 404.17 L709.16 401.18 L709.22 401.04 L706.30 399.47 L707.73 397.00 L710.55 398.74 L712.72 396.54 L712.84 396.45 L711.10 393.63 L713.57 392.20 L715.14 395.12z M726.2 405.5 A6.6 6.6 0 1 0 713.0 405.5 A6.6 6.6 0 1 0 726.2 405.5z" fill="#6688c4" fill-rule="evenodd"/><path d="M702.05 382.53 L702.19 382.51 L702.02 380.00 L704.78 380.00 L704.61 382.51 L707.23 383.56 L707.35 383.64 L709.00 381.75 L710.95 383.70 L709.06 385.35 L710.17 387.95 L710.19 388.09 L712.70 387.92 L712.70 390.68 L710.19 390.51 L709.14 393.13 L709.06 393.25 L710.95 394.90 L709.00 396.85 L707.35 394.96 L704.75 396.07 L704.61 396.09 L704.78 398.60 L702.02 398.60 L702.19 396.09 L699.57 395.04 L699.45 394.96 L697.80 396.85 L695.85 394.90 L697.74 393.25 L696.63 390.65 L696.61 390.51 L694.10 390.68 L694.10 387.92 L696.61 388.09 L697.66 385.47 L697.74 385.35 L695.85 383.70 L697.80 381.75 L699.45 383.64z M706.8 389.3 A3.4 3.4 0 1 0 700.0 389.3 A3.4 3.4 0 1 0 706.8 389.3z" fill="#6688c4" fill-rule="evenodd"/><path d="M870 383 A2 2 0 0 1 872 381.1 H879 A6.2 6.2 0 0 1 891.2 381.1 H898.9 A2 2 0 0 1 900.9 383 V398.5 H884 V418.1 H872 A2 2 0 0 1 870 416.1z M872.8 389.1 V387.5 A3 3 0 0 1 875.8 384.5 H879.4 A1 1 0 0 0 880.8 383.4 A4.5 4.5 0 0 1 889.4 383.4 A1 1 0 0 0 890.8 384.5 H895 A3 3 0 0 1 898 387.5 V389.1z" fill="#6688c4" fill-rule="evenodd"/>
<circle cx="885.1" cy="382.6" r="2" fill="#6688c4"/>
<rect x="881.9" y="398" width="28.5" height="25.3" rx="2.5" fill="#fff"/>
<path d="M884.9 400 H907.4 A1 1 0 0 1 908.4 401 V408.7 H883.9 V401 A1 1 0 0 1 884.9 400z" fill="#fed23c"/>
<rect x="894.8" y="400" width="2.9" height="8.7" fill="#fde6a0"/>
<path d="M885.1 408.7 H906.9 V419.3 A2 2 0 0 1 904.9 421.3 H887.1 A2 2 0 0 1 885.1 419.3z" fill="#eca034"/>
<rect x="894.8" y="408.7" width="2.9" height="12.6" fill="#f0b468"/>
</svg>
<div class="t" style="left:332.00px;top:279.50px;font-size:13px;font-weight:400;color:#161616;letter-spacing:0.525px;font-family:'Liberation Sans',sans-serif;-webkit-text-stroke:0.3px #161616;">Navigation Shortcut Group</div>
<svg style="left:340px;top:315px" width="17" height="13" viewBox="0 0 17 13"><rect x="0" y="0" width="16" height="2.9" rx="0.4" fill="#1f4a8e"/><rect x="0" y="5" width="16" height="2.9" rx="0.4" fill="#1f4a8e"/><rect x="0" y="10" width="16" height="2.2" rx="0.4" fill="#1f4a8e"/></svg>
<div class="t" style="left:360.40px;top:319.97px;font-size:11.5px;font-weight:700;color:#2b5096;letter-spacing:0.210px;font-family:'Liberation Sans',sans-serif;">Production Management</div>
<div class="t" style="left:342.00px;top:348.77px;font-size:11.5px;font-weight:700;color:#2b5096;letter-spacing:0.250px;font-family:'Liberation Sans',sans-serif;">Work Order Management</div>
<div class="t" style="left:515.00px;top:348.77px;font-size:11.5px;font-weight:700;color:#2b5096;letter-spacing:0.000px;font-family:'Liberation Sans',sans-serif;">Transactions</div>
<div class="t" style="left:687.80px;top:348.37px;font-size:11.5px;font-weight:700;color:#2b5096;letter-spacing:0.086px;font-family:'Liberation Sans',sans-serif;">Print and Setup</div>
<div class="t" style="left:861.00px;top:348.37px;font-size:11.5px;font-weight:700;color:#2b5096;letter-spacing:-0.167px;font-family:'Liberation Sans',sans-serif;">Reports</div>
<div class="t" style="left:393.40px;top:365.77px;font-size:11.5px;font-weight:400;color:#30539a;letter-spacing:-0.218px;font-family:'Liberation Sans',sans-serif;">Release WO's</div>
<div class="t" style="left:393.40px;top:380.77px;font-size:11.5px;font-weight:400;color:#30539a;letter-spacing:0.100px;font-family:'Liberation Sans',sans-serif;">Mark WO's Firm</div>
<div class="t" style="left:393.40px;top:395.77px;font-size:11.5px;font-weight:400;color:#30539a;letter-spacing:0.129px;font-family:'Liberation Sans',sans-serif;">Mark WO's Built</div>
<div class="t" style="left:394.40px;top:410.77px;font-size:11.5px;font-weight:400;color:#30539a;letter-spacing:0.033px;font-family:'Liberation Sans',sans-serif;">Close Work Order</div>
<div class="t" style="left:393.40px;top:425.77px;font-size:11.5px;font-weight:400;color:#30539a;letter-spacing:-0.021px;font-family:'Liberation Sans',sans-serif;">Mass Create Work ...</div>
<div class="t" style="left:566.30px;top:365.77px;font-size:11.5px;font-weight:400;color:#30539a;letter-spacing:0.247px;font-family:'Liberation Sans',sans-serif;">Build Work Order</div>
<div class="t" style="left:566.30px;top:380.77px;font-size:11.5px;font-weight:400;color:#30539a;letter-spacing:0.100px;font-family:'Liberation Sans',sans-serif;">Build Assemblies</div>
<div class="t" style="left:566.30px;top:395.77px;font-size:11.5px;font-weight:400;color:#30539a;letter-spacing:0.194px;font-family:'Liberation Sans',sans-serif;">Enter Completions</div>
<div class="t" style="left:566.30px;top:410.77px;font-size:11.5px;font-weight:400;color:#30539a;letter-spacing:0.113px;font-family:'Liberation Sans',sans-serif;">Issue Components</div>
<div class="t" style="left:566.30px;top:425.77px;font-size:11.5px;font-weight:400;color:#30539a;letter-spacing:0.168px;font-family:'Liberation Sans',sans-serif;">Unbuild Work Orde...</div>
<div class="t" style="left:740.00px;top:365.77px;font-size:11.5px;font-weight:400;color:#30539a;letter-spacing:-0.100px;font-family:'Liberation Sans',sans-serif;">WO Traveler</div>
<div class="t" style="left:739.00px;top:380.77px;font-size:11.5px;font-weight:400;color:#30539a;letter-spacing:0.092px;font-family:'Liberation Sans',sans-serif;">Dispatch List</div>
<div class="t" style="left:739.00px;top:395.77px;font-size:11.5px;font-weight:400;color:#30539a;letter-spacing:0.233px;font-family:'Liberation Sans',sans-serif;">Bill of Material</div>
<div class="t" style="left:740.00px;top:410.77px;font-size:11.5px;font-weight:400;color:#30539a;letter-spacing:0.013px;font-family:'Liberation Sans',sans-serif;">Work Center List</div>
<div class="t" style="left:740.00px;top:425.77px;font-size:11.5px;font-weight:400;color:#30539a;letter-spacing:-0.019px;font-family:'Liberation Sans',sans-serif;">Work Center Setup</div>
<div class="t" style="left:912.00px;top:365.77px;font-size:11.5px;font-weight:400;color:#30539a;letter-spacing:0.230px;font-family:'Liberation Sans',sans-serif;">BOM Inquiry</div>
<div class="t" style="left:913.00px;top:380.77px;font-size:11.5px;font-weight:400;color:#30539a;letter-spacing:0.024px;font-family:'Liberation Sans',sans-serif;">Costed BOM Inquiry</div>
<div class="t" style="left:912.00px;top:395.77px;font-size:11.5px;font-weight:400;color:#30539a;letter-spacing:0.150px;font-family:'Liberation Sans',sans-serif;">Production Varianc...</div>
<div class="t" style="left:913.00px;top:410.77px;font-size:11.5px;font-weight:400;color:#30539a;letter-spacing:0.059px;font-family:'Liberation Sans',sans-serif;">Component Where...</div>
<div class="t" style="left:912.00px;top:425.77px;font-size:11.5px;font-weight:400;color:#30539a;letter-spacing:0.085px;font-family:'Liberation Sans',sans-serif;">Material Shortage ...</div>
<div class="t" style="left:331.60px;top:492.70px;font-size:13px;font-weight:400;color:#161616;letter-spacing:0.436px;font-family:'Liberation Sans',sans-serif;-webkit-text-stroke:0.3px #161616;">Key Performance Indicators</div>
<div style="position:absolute;left:333px;top:523px;width:199px;height:99px;border:1px solid #d2d2d2;border-radius:5px;box-sizing:border-box"></div>
<div style="position:absolute;left:545px;top:523px;width:198px;height:99px;border:1px solid #d2d2d2;border-radius:5px;box-sizing:border-box"></div>
<div style="position:absolute;left:757px;top:523px;width:199px;height:99px;border:1px solid #d2d2d2;border-radius:5px;box-sizing:border-box"></div>
<div style="position:absolute;left:969px;top:523px;width:200px;height:99px;border:1px solid #d2d2d2;border-radius:5px;box-sizing:border-box"></div>
<div class="t" style="left:344.00px;top:529.78px;font-size:9px;font-weight:700;color:#505050;letter-spacing:0.000px;font-family:'Liberation Sans',sans-serif;transform:scaleX(0.9326);transform-origin:0 0;">WORK ORDERS - VALUE OF COMPLETED</div>
<div class="t" style="left:556.20px;top:529.78px;font-size:9px;font-weight:700;color:#505050;letter-spacing:0.000px;font-family:'Liberation Sans',sans-serif;transform:scaleX(0.9149);transform-origin:0 0;">WORK ORDERS - VALUE OF RELEASED</div>
<div class="t" style="left:768.60px;top:529.78px;font-size:9px;font-weight:700;color:#505050;letter-spacing:0.000px;font-family:'Liberation Sans',sans-serif;transform:scaleX(0.9865);transform-origin:0 0;">INVENTORY</div>
<div class="t" style="left:981.00px;top:529.78px;font-size:9px;font-weight:700;color:#505050;letter-spacing:0.000px;font-family:'Liberation Sans',sans-serif;transform:scaleX(0.9520);transform-origin:0 0;">NUMBER OF FULFILLMENTS</div>
<svg style="left:346.8px;top:567px" width="10" height="11.5" viewBox="0 0 10 11.5"><path d="M5.0 11.5 V1.2 M1 5.0 L5.0 1 L9 5.0" fill="none" stroke="#6cc06c" stroke-width="1.7" stroke-linecap="round" stroke-linejoin="round"/></svg>
<div class="t" style="left:359.63px;top:561.70px;font-size:21.5px;font-weight:400;color:#555;letter-spacing:0.000px;font-family:'Liberation Sans',sans-serif;transform:scaleX(0.9718);transform-origin:0 0;">134.6%</div>
<div class="t" style="left:556.50px;top:561.70px;font-size:21.5px;font-weight:400;color:#555;letter-spacing:0.000px;font-family:'Liberation Sans',sans-serif;transform:scaleX(0.9870);transform-origin:0 0;">$17,640</div>
<svg style="left:772.5px;top:567px" width="10" height="11.5" viewBox="0 0 10 11.5"><path d="M5.0 11.5 V1.2 M1 5.0 L5.0 1 L9 5.0" fill="none" stroke="#6cc06c" stroke-width="1.7" stroke-linecap="round" stroke-linejoin="round"/></svg>
<div class="t" style="left:783.65px;top:561.70px;font-size:21.5px;font-weight:400;color:#555;letter-spacing:0.000px;font-family:'Liberation Sans',sans-serif;transform:scaleX(0.9542);transform-origin:0 0;">3.2%</div>
<svg style="left:985px;top:567px" width="10" height="11.5" viewBox="0 0 10 11.5"><path d="M5.0 11.5 V1.2 M1 5.0 L5.0 1 L9 5.0" fill="none" stroke="#6cc06c" stroke-width="1.7" stroke-linecap="round" stroke-linejoin="round"/></svg>
<div class="t" style="left:996.02px;top:561.70px;font-size:21.5px;font-weight:400;color:#555;letter-spacing:0.000px;font-family:'Liberation Sans',sans-serif;transform:scaleX(0.9831);transform-origin:0 0;">22.8%</div>
<svg style="left:0;top:0" width="1200" height="1138" viewBox="0 0 1200 1138"><defs><linearGradient id="sg1" x1="0" y1="0" x2="0" y2="1"><stop offset="0" stop-color="#6cc06c" stop-opacity="0.45"/><stop offset="1" stop-color="#6cc06c" stop-opacity="0"/></linearGradient></defs>
<line x1="344.7" y1="601" x2="520" y2="601" stroke="#cfcfcf" stroke-width="1" stroke-dasharray="3 2"/>
<path d="M344.7 614 L389 614 L403.4 607.7 L418.5 598.7 L433 605.6 L447.7 597.5 L462.2 599.6 L476.4 587.5 L490.8 610 L506 611 L520 606.2 L520 614 L344.7 614z" fill="url(#sg1)"/>
<path d="M344.7 614 L389 614 L403.4 607.7 L418.5 598.7 L433 605.6 L447.7 597.5 L462.2 599.6 L476.4 587.5 L490.8 610 L506 611 L520 606.2" fill="none" stroke="#6cc06c" stroke-width="1.6" stroke-linejoin="round"/><defs><linearGradient id="sg3" x1="0" y1="0" x2="0" y2="1"><stop offset="0" stop-color="#6cc06c" stop-opacity="0.45"/><stop offset="1" stop-color="#6cc06c" stop-opacity="0"/></linearGradient></defs>
<line x1="769.2" y1="601" x2="943.7" y2="601" stroke="#cfcfcf" stroke-width="1" stroke-dasharray="3 2"/>
<path d="M769.2 603.5 L810 603 L850 602.5 L874 601.7 L887.7 598 L899.7 598 L907 600.2 L923.8 599.6 L943.7 600.2 L943.7 608 L769.2 608z" fill="url(#sg3)"/>
<path d="M769.2 603.5 L810 603 L850 602.5 L874 601.7 L887.7 598 L899.7 598 L907 600.2 L923.8 599.6 L943.7 600.2" fill="none" stroke="#6cc06c" stroke-width="1.6" stroke-linejoin="round"/><defs><linearGradient id="sg4" x1="0" y1="0" x2="0" y2="1"><stop offset="0" stop-color="#6cc06c" stop-opacity="0.45"/><stop offset="1" stop-color="#6cc06c" stop-opacity="0"/></linearGradient></defs>
<line x1="982.6" y1="601" x2="1156.8" y2="601" stroke="#cfcfcf" stroke-width="1" stroke-dasharray="3 2"/>
<path d="M982.6 613.8 L997.7 612.9 L1026.3 613.8 L1040.5 606.5 L1055 605.6 L1084.5 590 L1098.6 594.5 L1113 588 L1127.9 604.7 L1143.3 604.1 L1156.8 600.2 L1156.8 614 L982.6 614z" fill="url(#sg4)"/>
<path d="M982.6 613.8 L997.7 612.9 L1026.3 613.8 L1040.5 606.5 L1055 605.6 L1084.5 590 L1098.6 594.5 L1113 588 L1127.9 604.7 L1143.3 604.1 L1156.8 600.2" fill="none" stroke="#6cc06c" stroke-width="1.6" stroke-linejoin="round"/></svg>
<div style="position:absolute;left:332px;top:634px;width:837px;height:167px;border:1px solid #d2d2d2;border-radius:5px;box-sizing:border-box"></div>
<svg style="left:351.8px;top:644.7px" width="9" height="5" viewBox="0 0 9 5"><path d="M0 0H8.6L4.3 5z" fill="#5a6e8f"/></svg>
<div class="t" style="left:378.00px;top:643.30px;font-size:8.5px;font-weight:700;color:#3c3c3c;letter-spacing:0.000px;font-family:'Liberation Sans',sans-serif;transform:scaleX(0.9696);transform-origin:0 0;">INDICATOR</div>
<div class="t" style="left:651.00px;top:643.30px;font-size:8.5px;font-weight:700;color:#3c3c3c;letter-spacing:0.000px;font-family:'Liberation Sans',sans-serif;transform:scaleX(0.8788);transform-origin:0 0;">PERIOD</div>
<div class="t" style="left:897.30px;top:643.30px;font-size:8.5px;font-weight:700;color:#3c3c3c;letter-spacing:0.000px;font-family:'Liberation Sans',sans-serif;transform:scaleX(0.8690);transform-origin:0 0;">CURRENT</div>
<div class="t" style="left:993.20px;top:643.30px;font-size:8.5px;font-weight:700;color:#3c3c3c;letter-spacing:0.000px;font-family:'Liberation Sans',sans-serif;transform:scaleX(0.8886);transform-origin:0 0;">PREVIOUS</div>
<div class="t" style="left:1089.00px;top:643.30px;font-size:8.5px;font-weight:700;color:#3c3c3c;letter-spacing:0.000px;font-family:'Liberation Sans',sans-serif;transform:scaleX(0.8973);transform-origin:0 0;">CHANGE</div>
<div class="t" style="left:378.00px;top:664.37px;font-size:9.6px;font-weight:700;color:#3a3a3a;letter-spacing:0.000px;font-family:'Liberation Sans',sans-serif;transform:scaleX(1.1316);transform-origin:0 0;">Work Orders - Value of Completed</div>
<div class="t" style="left:651.00px;top:664.37px;font-size:9.6px;font-weight:700;color:#344f83;letter-spacing:0.000px;font-family:'Liberation Sans',sans-serif;transform:scaleX(1.1264);transform-origin:0 0;">This Month vs. Last Month</div>
<div class="t" style="left:897.30px;top:664.03px;font-size:10px;font-weight:700;color:#344f83;letter-spacing:0.333px;font-family:'Liberation Sans',sans-serif;">$85,965</div>
<div class="t" style="left:993.20px;top:664.03px;font-size:10px;font-weight:700;color:#344f83;letter-spacing:0.367px;font-family:'Liberation Sans',sans-serif;">$36,648</div>
<svg style="left:1096.4px;top:661.8px" width="9.5" height="11.5" viewBox="0 0 9.5 11.5"><path d="M4.75 11.5 V1.2 M1 4.75 L4.75 1 L8.5 4.75" fill="none" stroke="#6cc06c" stroke-width="1.7" stroke-linecap="round" stroke-linejoin="round"/></svg>
<div class="t" style="left:1109.50px;top:662.93px;font-size:10px;font-weight:700;color:#333;letter-spacing:0.200px;font-family:'Liberation Sans',sans-serif;">134.6%</div>
<div class="t" style="left:378.00px;top:684.37px;font-size:9.6px;font-weight:700;color:#3a3a3a;letter-spacing:0.000px;font-family:'Liberation Sans',sans-serif;transform:scaleX(1.1300);transform-origin:0 0;">Work Orders - Value of Released</div>
<div class="t" style="left:651.00px;top:684.37px;font-size:9.6px;font-weight:700;color:#344f83;letter-spacing:0.000px;font-family:'Liberation Sans',sans-serif;transform:scaleX(1.1300);transform-origin:0 0;">Current</div>
<div class="t" style="left:897.30px;top:684.03px;font-size:10px;font-weight:700;color:#344f83;letter-spacing:0.420px;font-family:'Liberation Sans',sans-serif;">$17,640</div>
<div class="t" style="left:378.00px;top:704.37px;font-size:9.6px;font-weight:700;color:#3a3a3a;letter-spacing:0.000px;font-family:'Liberation Sans',sans-serif;transform:scaleX(1.1300);transform-origin:0 0;">Inventory</div>
<div class="t" style="left:651.00px;top:704.37px;font-size:9.6px;font-weight:700;color:#344f83;letter-spacing:0.000px;font-family:'Liberation Sans',sans-serif;transform:scaleX(1.1110);transform-origin:0 0;">Today vs. Same Day Last Month</div>
<div class="t" style="left:897.30px;top:704.03px;font-size:10px;font-weight:700;color:#344f83;letter-spacing:0.300px;font-family:'Liberation Sans',sans-serif;">$6,428,403</div>
<div class="t" style="left:993.20px;top:704.03px;font-size:10px;font-weight:700;color:#344f83;letter-spacing:0.333px;font-family:'Liberation Sans',sans-serif;">$6,231,010</div>
<svg style="left:1096.4px;top:701.8px" width="9.5" height="11.5" viewBox="0 0 9.5 11.5"><path d="M4.75 11.5 V1.2 M1 4.75 L4.75 1 L8.5 4.75" fill="none" stroke="#6cc06c" stroke-width="1.7" stroke-linecap="round" stroke-linejoin="round"/></svg>
<div class="t" style="left:1109.50px;top:702.93px;font-size:10px;font-weight:700;color:#333;letter-spacing:0.383px;font-family:'Liberation Sans',sans-serif;">3.2%</div>
<div class="t" style="left:378.00px;top:724.37px;font-size:9.6px;font-weight:700;color:#3a3a3a;letter-spacing:0.000px;font-family:'Liberation Sans',sans-serif;transform:scaleX(1.1300);transform-origin:0 0;">Number of Fulfillments</div>
<div class="t" style="left:651.00px;top:724.37px;font-size:9.6px;font-weight:700;color:#344f83;letter-spacing:0.000px;font-family:'Liberation Sans',sans-serif;transform:scaleX(1.1264);transform-origin:0 0;">This Month vs. Last Month</div>
<div class="t" style="left:897.30px;top:724.03px;font-size:10px;font-weight:700;color:#344f83;letter-spacing:0.770px;font-family:'Liberation Sans',sans-serif;">97</div>
<div class="t" style="left:993.20px;top:724.03px;font-size:10px;font-weight:700;color:#344f83;letter-spacing:0.770px;font-family:'Liberation Sans',sans-serif;">79</div>
<svg style="left:1096.4px;top:721.8px" width="9.5" height="11.5" viewBox="0 0 9.5 11.5"><path d="M4.75 11.5 V1.2 M1 4.75 L4.75 1 L8.5 4.75" fill="none" stroke="#6cc06c" stroke-width="1.7" stroke-linecap="round" stroke-linejoin="round"/></svg>
<div class="t" style="left:1109.50px;top:722.93px;font-size:10px;font-weight:700;color:#333;letter-spacing:0.363px;font-family:'Liberation Sans',sans-serif;">22.8%</div>
<div class="t" style="left:378.00px;top:744.37px;font-size:9.6px;font-weight:700;color:#3a3a3a;letter-spacing:0.000px;font-family:'Liberation Sans',sans-serif;transform:scaleX(1.1396);transform-origin:0 0;">Number of Customer Returns</div>
<div class="t" style="left:651.00px;top:744.37px;font-size:9.6px;font-weight:700;color:#344f83;letter-spacing:0.000px;font-family:'Liberation Sans',sans-serif;transform:scaleX(1.1264);transform-origin:0 0;">This Month vs. Last Month</div>
<div class="t" style="left:897.30px;top:744.03px;font-size:10px;font-weight:700;color:#344f83;letter-spacing:0.000px;font-family:'Liberation Sans',sans-serif;">3</div>
<div class="t" style="left:993.20px;top:744.03px;font-size:10px;font-weight:700;color:#344f83;letter-spacing:0.000px;font-family:'Liberation Sans',sans-serif;">1</div>
<svg style="left:1096.4px;top:741.8px" width="9.5" height="11.5" viewBox="0 0 9.5 11.5"><path d="M4.75 11.5 V1.2 M1 4.75 L4.75 1 L8.5 4.75" fill="none" stroke="#6cc06c" stroke-width="1.7" stroke-linecap="round" stroke-linejoin="round"/></svg>
<div class="t" style="left:1109.50px;top:742.93px;font-size:10px;font-weight:700;color:#333;letter-spacing:0.340px;font-family:'Liberation Sans',sans-serif;">200.0%</div>
<div class="t" style="left:378.00px;top:764.37px;font-size:9.6px;font-weight:700;color:#3a3a3a;letter-spacing:0.000px;font-family:'Liberation Sans',sans-serif;transform:scaleX(1.1300);transform-origin:0 0;">Orders</div>
<div class="t" style="left:651.00px;top:764.37px;font-size:9.6px;font-weight:700;color:#344f83;letter-spacing:0.000px;font-family:'Liberation Sans',sans-serif;transform:scaleX(1.1318);transform-origin:0 0;">Last Month vs. Month Before Last</div>
<div class="t" style="left:897.30px;top:764.03px;font-size:10px;font-weight:700;color:#344f83;letter-spacing:0.595px;font-family:'Liberation Sans',sans-serif;">105</div>
<div class="t" style="left:993.20px;top:764.03px;font-size:10px;font-weight:700;color:#344f83;letter-spacing:0.770px;font-family:'Liberation Sans',sans-serif;">79</div>
<svg style="left:1096.4px;top:761.8px" width="9.5" height="11.5" viewBox="0 0 9.5 11.5"><path d="M4.75 11.5 V1.2 M1 4.75 L4.75 1 L8.5 4.75" fill="none" stroke="#6cc06c" stroke-width="1.7" stroke-linecap="round" stroke-linejoin="round"/></svg>
<div class="t" style="left:1109.50px;top:762.93px;font-size:10px;font-weight:700;color:#333;letter-spacing:0.363px;font-family:'Liberation Sans',sans-serif;">32.9%</div>
<div class="t" style="left:378.00px;top:784.37px;font-size:9.6px;font-weight:700;color:#3a3a3a;letter-spacing:0.000px;font-family:'Liberation Sans',sans-serif;transform:scaleX(1.1300);transform-origin:0 0;">Late Shipped Orders</div>
<div class="t" style="left:651.00px;top:784.37px;font-size:9.6px;font-weight:700;color:#344f83;letter-spacing:0.000px;font-family:'Liberation Sans',sans-serif;transform:scaleX(1.1300);transform-origin:0 0;">Current</div>
<div class="t" style="left:897.30px;top:784.03px;font-size:10px;font-weight:700;color:#344f83;letter-spacing:0.595px;font-family:'Liberation Sans',sans-serif;">995</div>
<div class="t" style="left:331.60px;top:842.70px;font-size:13px;font-weight:400;color:#161616;letter-spacing:0.756px;font-family:'Liberation Sans',sans-serif;-webkit-text-stroke:0.3px #161616;">Production</div>
<div style="position:absolute;left:333px;top:874px;width:199px;height:65px;border:1px solid #d2d2d2;border-radius:5px;box-sizing:border-box"></div>
<div style="position:absolute;left:545px;top:874px;width:198px;height:65px;border:1px solid #d2d2d2;border-radius:5px;box-sizing:border-box"></div>
<div style="position:absolute;left:757px;top:874px;width:199px;height:65px;border:1px solid #d2d2d2;border-radius:5px;box-sizing:border-box"></div>
<div style="position:absolute;left:969px;top:874px;width:200px;height:65px;border:1px solid #d2d2d2;border-radius:5px;box-sizing:border-box"></div>
<div class="t" style="left:344.00px;top:879.88px;font-size:9px;font-weight:700;color:#505050;letter-spacing:0.000px;font-family:'Liberation Sans',sans-serif;transform:scaleX(0.9540);transform-origin:0 0;">BUILT WOS</div>
<div class="t" style="left:556.20px;top:879.88px;font-size:9px;font-weight:700;color:#505050;letter-spacing:0.000px;font-family:'Liberation Sans',sans-serif;transform:scaleX(0.9529);transform-origin:0 0;">PLANNED WOS</div>
<div class="t" style="left:768.60px;top:879.88px;font-size:9px;font-weight:700;color:#505050;letter-spacing:0.000px;font-family:'Liberation Sans',sans-serif;transform:scaleX(0.9505);transform-origin:0 0;">PARTIAL BUILT WOS</div>
<div class="t" style="left:981.00px;top:879.88px;font-size:9px;font-weight:700;color:#505050;letter-spacing:0.000px;font-family:'Liberation Sans',sans-serif;transform:scaleX(0.9557);transform-origin:0 0;">NUMBER OF WOS</div>
<div class="t" style="left:342.94px;top:910.50px;font-size:21.5px;font-weight:400;color:#555;letter-spacing:0.000px;font-family:'Liberation Sans',sans-serif;transform:scaleX(1.0591);transform-origin:0 0;">35</div>
<div class="t" style="left:555.45px;top:910.50px;font-size:21.5px;font-weight:400;color:#555;letter-spacing:0.000px;font-family:'Liberation Sans',sans-serif;transform:scaleX(1.0545);transform-origin:0 0;">18</div>
<div class="t" style="left:767.46px;top:910.50px;font-size:21.5px;font-weight:400;color:#555;letter-spacing:0.000px;font-family:'Liberation Sans',sans-serif;transform:scaleX(1.1400);transform-origin:0 0;">5</div>
<div class="t" style="left:979.98px;top:910.50px;font-size:21.5px;font-weight:400;color:#555;letter-spacing:0.000px;font-family:'Liberation Sans',sans-serif;transform:scaleX(1.0235);transform-origin:0 0;">129</div>
<div style="position:absolute;left:332px;top:952px;width:837px;height:182px;border:1px solid #d2d2d2;border-radius:5px;box-sizing:border-box;overflow:hidden"></div>
<div style="position:absolute;left:333px;top:996px;width:835px;height:20px;background:#f1f1f1"></div>
<div style="position:absolute;left:333px;top:1036px;width:835px;height:20px;background:#f1f1f1"></div>
<div style="position:absolute;left:333px;top:1076px;width:835px;height:20px;background:#f1f1f1"></div>
<div class="t" style="left:349.50px;top:961.00px;font-size:8.5px;font-weight:700;color:#3c3c3c;letter-spacing:0.000px;font-family:'Liberation Sans',sans-serif;transform:scaleX(0.9609);transform-origin:0 0;">INDICATOR</div>
<div class="t" style="left:478.60px;top:961.00px;font-size:8.5px;font-weight:700;color:#3c3c3c;letter-spacing:0.000px;font-family:'Liberation Sans',sans-serif;">TODAY</div>
<div class="t" style="left:530.10px;top:961.00px;font-size:8.5px;font-weight:700;color:#3c3c3c;letter-spacing:0.000px;font-family:'Liberation Sans',sans-serif;">THIS WEEK</div>
<div class="t" style="left:596.20px;top:961.00px;font-size:8.5px;font-weight:700;color:#3c3c3c;letter-spacing:0.000px;font-family:'Liberation Sans',sans-serif;">THIS MONTH</div>
<div class="t" style="left:670.70px;top:961.00px;font-size:8.5px;font-weight:700;color:#3c3c3c;letter-spacing:0.000px;font-family:'Liberation Sans',sans-serif;">LAST MONTH</div>
<div class="t" style="left:747.50px;top:961.00px;font-size:8.5px;font-weight:700;color:#3c3c3c;letter-spacing:0.000px;font-family:'Liberation Sans',sans-serif;transform:scaleX(0.8934);transform-origin:0 0;">THIS FISCAL QUARTER TO DATE</div>
<div class="t" style="left:893.10px;top:961.00px;font-size:8.5px;font-weight:700;color:#3c3c3c;letter-spacing:0.000px;font-family:'Liberation Sans',sans-serif;transform:scaleX(0.8842);transform-origin:0 0;">LAST FISCAL QUARTER TO DATE</div>
<div class="t" style="left:1040.50px;top:961.00px;font-size:8.5px;font-weight:700;color:#3c3c3c;letter-spacing:0.000px;font-family:'Liberation Sans',sans-serif;transform:scaleX(0.8889);transform-origin:0 0;">THIS FISCAL YEAR TO DATE</div>
<div class="t" style="left:348.50px;top:981.83px;font-size:10px;font-weight:400;color:#3a3a3a;letter-spacing:0.542px;font-family:'Liberation Sans',sans-serif;">Number of WOs</div>
<div class="t" style="left:478.60px;top:981.83px;font-size:10px;font-weight:400;color:#3b5a90;letter-spacing:0.000px;font-family:'Liberation Sans',sans-serif;transform:scaleX(1.1000);transform-origin:0 0;">0</div>
<div class="t" style="left:530.10px;top:981.83px;font-size:10px;font-weight:400;color:#3b5a90;letter-spacing:0.000px;font-family:'Liberation Sans',sans-serif;transform:scaleX(1.1000);transform-origin:0 0;">42</div>
<div class="t" style="left:595.10px;top:981.83px;font-size:10px;font-weight:400;color:#3b5a90;letter-spacing:0.000px;font-family:'Liberation Sans',sans-serif;transform:scaleX(1.1000);transform-origin:0 0;">129</div>
<div class="t" style="left:670.70px;top:981.83px;font-size:10px;font-weight:400;color:#3b5a90;letter-spacing:0.000px;font-family:'Liberation Sans',sans-serif;transform:scaleX(1.1000);transform-origin:0 0;">65</div>
<div class="t" style="left:746.40px;top:981.83px;font-size:10px;font-weight:400;color:#3b5a90;letter-spacing:0.000px;font-family:'Liberation Sans',sans-serif;transform:scaleX(1.1000);transform-origin:0 0;">110</div>
<div class="t" style="left:892.00px;top:981.83px;font-size:10px;font-weight:400;color:#3b5a90;letter-spacing:0.000px;font-family:'Liberation Sans',sans-serif;transform:scaleX(1.1000);transform-origin:0 0;">171</div>
<div class="t" style="left:1039.40px;top:981.83px;font-size:10px;font-weight:400;color:#3b5a90;letter-spacing:0.000px;font-family:'Liberation Sans',sans-serif;transform:scaleX(1.1000);transform-origin:0 0;">110</div>
<div class="t" style="left:348.50px;top:1001.83px;font-size:10px;font-weight:400;color:#3a3a3a;letter-spacing:0.183px;font-family:'Liberation Sans',sans-serif;">Planned WOs</div>
<div class="t" style="left:478.60px;top:1001.83px;font-size:10px;font-weight:400;color:#3a3a3a;letter-spacing:0.000px;font-family:'Liberation Sans',sans-serif;transform:scaleX(1.1000);transform-origin:0 0;">0</div>
<div class="t" style="left:530.10px;top:1001.83px;font-size:10px;font-weight:400;color:#3a3a3a;letter-spacing:0.000px;font-family:'Liberation Sans',sans-serif;transform:scaleX(1.1000);transform-origin:0 0;">3</div>
<div class="t" style="left:595.10px;top:1001.83px;font-size:10px;font-weight:400;color:#3a3a3a;letter-spacing:0.000px;font-family:'Liberation Sans',sans-serif;transform:scaleX(1.1000);transform-origin:0 0;">18</div>
<div class="t" style="left:670.70px;top:1001.83px;font-size:10px;font-weight:400;color:#3a3a3a;letter-spacing:0.000px;font-family:'Liberation Sans',sans-serif;transform:scaleX(1.1000);transform-origin:0 0;">34</div>
<div class="t" style="left:747.50px;top:1001.83px;font-size:10px;font-weight:400;color:#3a3a3a;letter-spacing:0.000px;font-family:'Liberation Sans',sans-serif;transform:scaleX(1.1000);transform-origin:0 0;">42</div>
<div class="t" style="left:892.00px;top:1001.83px;font-size:10px;font-weight:400;color:#3a3a3a;letter-spacing:0.000px;font-family:'Liberation Sans',sans-serif;transform:scaleX(1.1000);transform-origin:0 0;">1</div>
<div class="t" style="left:1040.50px;top:1001.83px;font-size:10px;font-weight:400;color:#3a3a3a;letter-spacing:0.000px;font-family:'Liberation Sans',sans-serif;transform:scaleX(1.1000);transform-origin:0 0;">42</div>
<div class="t" style="left:348.50px;top:1021.83px;font-size:10px;font-weight:400;color:#3a3a3a;letter-spacing:0.180px;font-family:'Liberation Sans',sans-serif;">Released WOs</div>
<div class="t" style="left:478.60px;top:1021.83px;font-size:10px;font-weight:400;color:#3b5a90;letter-spacing:0.000px;font-family:'Liberation Sans',sans-serif;transform:scaleX(1.1000);transform-origin:0 0;">0</div>
<div class="t" style="left:529.00px;top:1021.83px;font-size:10px;font-weight:400;color:#3b5a90;letter-spacing:0.000px;font-family:'Liberation Sans',sans-serif;transform:scaleX(1.1000);transform-origin:0 0;">14</div>
<div class="t" style="left:596.20px;top:1021.83px;font-size:10px;font-weight:400;color:#3b5a90;letter-spacing:0.000px;font-family:'Liberation Sans',sans-serif;transform:scaleX(1.1000);transform-origin:0 0;">32</div>
<div class="t" style="left:670.70px;top:1021.83px;font-size:10px;font-weight:400;color:#3b5a90;letter-spacing:0.000px;font-family:'Liberation Sans',sans-serif;transform:scaleX(1.1000);transform-origin:0 0;">8</div>
<div class="t" style="left:746.40px;top:1021.83px;font-size:10px;font-weight:400;color:#3b5a90;letter-spacing:0.000px;font-family:'Liberation Sans',sans-serif;transform:scaleX(1.1000);transform-origin:0 0;">13</div>
<div class="t" style="left:893.10px;top:1021.83px;font-size:10px;font-weight:400;color:#3b5a90;letter-spacing:0.000px;font-family:'Liberation Sans',sans-serif;transform:scaleX(1.1000);transform-origin:0 0;">29</div>
<div class="t" style="left:1039.40px;top:1021.83px;font-size:10px;font-weight:400;color:#3b5a90;letter-spacing:0.000px;font-family:'Liberation Sans',sans-serif;transform:scaleX(1.1000);transform-origin:0 0;">13</div>
<div class="t" style="left:348.50px;top:1041.84px;font-size:10px;font-weight:400;color:#3a3a3a;letter-spacing:0.139px;font-family:'Liberation Sans',sans-serif;">Partial Built WOs</div>
<div class="t" style="left:478.60px;top:1041.84px;font-size:10px;font-weight:400;color:#3a3a3a;letter-spacing:0.000px;font-family:'Liberation Sans',sans-serif;transform:scaleX(1.1000);transform-origin:0 0;">0</div>
<div class="t" style="left:530.10px;top:1041.84px;font-size:10px;font-weight:400;color:#3a3a3a;letter-spacing:0.000px;font-family:'Liberation Sans',sans-serif;transform:scaleX(1.1000);transform-origin:0 0;">2</div>
<div class="t" style="left:596.20px;top:1041.84px;font-size:10px;font-weight:400;color:#3a3a3a;letter-spacing:0.000px;font-family:'Liberation Sans',sans-serif;transform:scaleX(1.1000);transform-origin:0 0;">5</div>
<div class="t" style="left:670.70px;top:1041.84px;font-size:10px;font-weight:400;color:#3a3a3a;letter-spacing:0.000px;font-family:'Liberation Sans',sans-serif;transform:scaleX(1.1000);transform-origin:0 0;">2</div>
<div class="t" style="left:747.50px;top:1041.84px;font-size:10px;font-weight:400;color:#3a3a3a;letter-spacing:0.000px;font-family:'Liberation Sans',sans-serif;transform:scaleX(1.1000);transform-origin:0 0;">3</div>
<div class="t" style="left:892.00px;top:1041.84px;font-size:10px;font-weight:400;color:#3a3a3a;letter-spacing:0.000px;font-family:'Liberation Sans',sans-serif;transform:scaleX(1.1000);transform-origin:0 0;">12</div>
<div class="t" style="left:1040.50px;top:1041.84px;font-size:10px;font-weight:400;color:#3a3a3a;letter-spacing:0.000px;font-family:'Liberation Sans',sans-serif;transform:scaleX(1.1000);transform-origin:0 0;">3</div>
<div class="t" style="left:348.50px;top:1061.84px;font-size:10px;font-weight:400;color:#3a3a3a;letter-spacing:0.161px;font-family:'Liberation Sans',sans-serif;">Built WOs</div>
<div class="t" style="left:478.60px;top:1061.84px;font-size:10px;font-weight:400;color:#3b5a90;letter-spacing:0.000px;font-family:'Liberation Sans',sans-serif;transform:scaleX(1.1000);transform-origin:0 0;">0</div>
<div class="t" style="left:530.10px;top:1061.84px;font-size:10px;font-weight:400;color:#3b5a90;letter-spacing:0.000px;font-family:'Liberation Sans',sans-serif;transform:scaleX(1.1000);transform-origin:0 0;">5</div>
<div class="t" style="left:596.20px;top:1061.84px;font-size:10px;font-weight:400;color:#3b5a90;letter-spacing:0.000px;font-family:'Liberation Sans',sans-serif;transform:scaleX(1.1000);transform-origin:0 0;">35</div>
<div class="t" style="left:670.70px;top:1061.84px;font-size:10px;font-weight:400;color:#3b5a90;letter-spacing:0.000px;font-family:'Liberation Sans',sans-serif;transform:scaleX(1.1000);transform-origin:0 0;">6</div>
<div class="t" style="left:746.40px;top:1061.84px;font-size:10px;font-weight:400;color:#3b5a90;letter-spacing:0.000px;font-family:'Liberation Sans',sans-serif;transform:scaleX(1.1000);transform-origin:0 0;">13</div>
<div class="t" style="left:892.00px;top:1061.84px;font-size:10px;font-weight:400;color:#3b5a90;letter-spacing:0.000px;font-family:'Liberation Sans',sans-serif;transform:scaleX(1.1000);transform-origin:0 0;">112</div>
<div class="t" style="left:1039.40px;top:1061.84px;font-size:10px;font-weight:400;color:#3b5a90;letter-spacing:0.000px;font-family:'Liberation Sans',sans-serif;transform:scaleX(1.1000);transform-origin:0 0;">13</div>
<div class="t" style="left:349.50px;top:1081.84px;font-size:10px;font-weight:400;color:#3a3a3a;letter-spacing:0.187px;font-family:'Liberation Sans',sans-serif;">Closed WOs</div>
<div class="t" style="left:477.50px;top:1081.84px;font-size:10px;font-weight:400;color:#3a3a3a;letter-spacing:0.000px;font-family:'Liberation Sans',sans-serif;transform:scaleX(1.1000);transform-origin:0 0;">134</div>
<div class="t" style="left:529.00px;top:1081.84px;font-size:10px;font-weight:400;color:#3a3a3a;letter-spacing:0.000px;font-family:'Liberation Sans',sans-serif;transform:scaleX(1.1000);transform-origin:0 0;">134</div>
<div class="t" style="left:595.10px;top:1081.84px;font-size:10px;font-weight:400;color:#3a3a3a;letter-spacing:0.000px;font-family:'Liberation Sans',sans-serif;transform:scaleX(1.1000);transform-origin:0 0;">134</div>
<div class="t" style="left:669.60px;top:1081.84px;font-size:10px;font-weight:400;color:#3a3a3a;letter-spacing:0.000px;font-family:'Liberation Sans',sans-serif;transform:scaleX(1.1000);transform-origin:0 0;">134</div>
<div class="t" style="left:746.40px;top:1081.84px;font-size:10px;font-weight:400;color:#3a3a3a;letter-spacing:0.000px;font-family:'Liberation Sans',sans-serif;transform:scaleX(1.1000);transform-origin:0 0;">134</div>
<div class="t" style="left:892.00px;top:1081.84px;font-size:10px;font-weight:400;color:#3a3a3a;letter-spacing:0.000px;font-family:'Liberation Sans',sans-serif;transform:scaleX(1.1000);transform-origin:0 0;">134</div>
<div class="t" style="left:1039.40px;top:1081.84px;font-size:10px;font-weight:400;color:#3a3a3a;letter-spacing:0.000px;font-family:'Liberation Sans',sans-serif;transform:scaleX(1.1000);transform-origin:0 0;">134</div>
<div class="t" style="left:349.50px;top:1101.84px;font-size:10px;font-weight:400;color:#3a3a3a;letter-spacing:0.183px;font-family:'Liberation Sans',sans-serif;">Canceled WOs</div>
<div class="t" style="left:478.60px;top:1101.84px;font-size:10px;font-weight:400;color:#3b5a90;letter-spacing:0.000px;font-family:'Liberation Sans',sans-serif;transform:scaleX(1.1000);transform-origin:0 0;">0</div>
<div class="t" style="left:530.10px;top:1101.84px;font-size:10px;font-weight:400;color:#3b5a90;letter-spacing:0.000px;font-family:'Liberation Sans',sans-serif;transform:scaleX(1.1000);transform-origin:0 0;">0</div>
<div class="t" style="left:596.20px;top:1101.84px;font-size:10px;font-weight:400;color:#3b5a90;letter-spacing:0.000px;font-family:'Liberation Sans',sans-serif;transform:scaleX(1.1000);transform-origin:0 0;">0</div>
<div class="t" style="left:670.70px;top:1101.84px;font-size:10px;font-weight:400;color:#3b5a90;letter-spacing:0.000px;font-family:'Liberation Sans',sans-serif;transform:scaleX(1.1000);transform-origin:0 0;">0</div>
<div class="t" style="left:747.50px;top:1101.84px;font-size:10px;font-weight:400;color:#3b5a90;letter-spacing:0.000px;font-family:'Liberation Sans',sans-serif;transform:scaleX(1.1000);transform-origin:0 0;">0</div>
<div class="t" style="left:893.10px;top:1101.84px;font-size:10px;font-weight:400;color:#3b5a90;letter-spacing:0.000px;font-family:'Liberation Sans',sans-serif;transform:scaleX(1.1000);transform-origin:0 0;">0</div>
<div class="t" style="left:1040.50px;top:1101.84px;font-size:10px;font-weight:400;color:#3b5a90;letter-spacing:0.000px;font-family:'Liberation Sans',sans-serif;transform:scaleX(1.1000);transform-origin:0 0;">0</div>
<div style="position:absolute;left:333px;top:1117px;width:835px;height:16px;background:#f1f1f1"></div>
<div style="position:absolute;left:349.5px;top:1120px;width:693.5px;height:13px;background:#c1c1c1"></div>
<svg style="left:338px;top:1122px" width="6" height="9" viewBox="0 0 6 9"><path d="M5 0V9L0 4.5z" fill="#a3a3a3"/></svg>
<svg style="left:1157px;top:1122px" width="6" height="9" viewBox="0 0 6 9"><path d="M0 0V9L5 4.5z" fill="#505050"/></svg>
<div class="t" style="left:1208.30px;top:104.00px;font-size:13px;font-weight:400;color:#161616;letter-spacing:0.250px;font-family:'Liberation Sans',sans-serif;-webkit-text-stroke:0.3px #161616;">Capacity by Work Center by Week</div>
<div class="t" style="left:1209.40px;top:141.66px;font-size:9.5px;font-weight:400;color:#555;letter-spacing:0.000px;font-family:'Liberation Sans',sans-serif;transform:scaleX(0.9478);transform-origin:0 0;">MANUFACTURING WORK CENTER</div>
<div style="position:absolute;left:1209px;top:152px;width:248px;height:20px;border:1px solid #b8b8b8;box-sizing:border-box;background:#fff"></div>
<div class="t" style="left:1213.00px;top:157.61px;font-size:10.5px;font-weight:400;color:#222;letter-spacing:0.033px;font-family:'Liberation Sans',sans-serif;">- All -</div>
<svg style="left:1442.5px;top:158.6px" width="10" height="6" viewBox="0 0 10 6"><path d="M0 0H9.5L4.75 6z" fill="#5a6e8f"/></svg>
<svg style="left:1212px;top:191px" width="40" height="11" viewBox="0 0 40 11"><path d="M6 1 L2 5.5 L6 10" fill="none" stroke="#5a6e8f" stroke-width="1.8"/><path d="M31 1 L35 5.5 L31 10" fill="none" stroke="#5a6e8f" stroke-width="1.8"/></svg>
<div style="position:absolute;left:1337px;top:186px;width:120px;height:21px;border:1px solid #c4c4c4;box-sizing:border-box;background:#fff"></div>
<div class="t" style="left:1346.70px;top:191.51px;font-size:10.5px;font-weight:400;color:#222;letter-spacing:-0.013px;font-family:'Liberation Sans',sans-serif;">2022-36 — 2022-45</div>
<svg style="left:1444.6px;top:194.3px" width="8" height="6" viewBox="0 0 8 6"><path d="M0 0H7.5L3.75 5.7z" fill="#5a6e8f"/></svg>
<div class="t" style="left:1207.90px;top:212.94px;font-size:10px;font-weight:400;color:#444;letter-spacing:-0.440px;font-family:'Liberation Sans',sans-serif;">TOTAL:</div>
<div class="t" style="left:1243.50px;top:212.94px;font-size:10px;font-weight:400;color:#3b5a90;letter-spacing:0.000px;font-family:'Liberation Sans',sans-serif;transform:scaleX(0.9545);transform-origin:0 0;">33</div>
<svg style="left:0;top:0" width="1493" height="1138" viewBox="0 0 1493 1138"><defs><linearGradient id="cg0" x1="0" y1="0" x2="0" y2="1"><stop offset="0" stop-color="#5ccbdd"/><stop offset="1" stop-color="#4cc0d6"/></linearGradient><linearGradient id="cg1" x1="0" y1="0" x2="0" y2="1"><stop offset="0" stop-color="#e8d44a"/><stop offset="1" stop-color="#dfcb2a"/></linearGradient><linearGradient id="cg2" x1="0" y1="0" x2="0" y2="1"><stop offset="0" stop-color="#ff9a3a"/><stop offset="1" stop-color="#f98a1f"/></linearGradient><linearGradient id="cg3" x1="0" y1="0" x2="0" y2="1"><stop offset="0" stop-color="#9290f5"/><stop offset="1" stop-color="#7c78ee"/></linearGradient><linearGradient id="cg4" x1="0" y1="0" x2="0" y2="1"><stop offset="0" stop-color="#5cc24a"/><stop offset="1" stop-color="#3fae2f"/></linearGradient><linearGradient id="cg5" x1="0" y1="0" x2="0" y2="1"><stop offset="0" stop-color="#6f9cff"/><stop offset="1" stop-color="#4f7ef8"/></linearGradient><linearGradient id="cg6" x1="0" y1="0" x2="0" y2="1"><stop offset="0" stop-color="#e87aa8"/><stop offset="1" stop-color="#d9558f"/></linearGradient><linearGradient id="cg7" x1="0" y1="0" x2="0" y2="1"><stop offset="0" stop-color="#6fb0d8"/><stop offset="1" stop-color="#4f9cc8"/></linearGradient><linearGradient id="cg8" x1="0" y1="0" x2="0" y2="1"><stop offset="0" stop-color="#a55bb5"/><stop offset="1" stop-color="#8f3c9f"/></linearGradient><linearGradient id="cg9" x1="0" y1="0" x2="0" y2="1"><stop offset="0" stop-color="#5a78c0"/><stop offset="1" stop-color="#3e5aa8"/></linearGradient></defs><line x1="1242.3" y1="234" x2="1452.6" y2="234" stroke="#dcdcdc" stroke-width="1"/><line x1="1242.3" y1="277.7" x2="1452.6" y2="277.7" stroke="#dcdcdc" stroke-width="1"/><line x1="1242.3" y1="319.5" x2="1452.6" y2="319.5" stroke="#dcdcdc" stroke-width="1"/><line x1="1242.3" y1="361.8" x2="1452.6" y2="361.8" stroke="#dcdcdc" stroke-width="1"/><line x1="1242.3" y1="404.2" x2="1452.6" y2="404.2" stroke="#dcdcdc" stroke-width="1"/><line x1="1242.3" y1="445.8" x2="1452.6" y2="445.8" stroke="#dcdcdc" stroke-width="1"/><path d="M1285.3 488 V303.1 A5.2 5.2 0 0 1 1295.7 303.1 V488z" fill="url(#cg0)" opacity="0.92"/><path d="M1298.1 488 V379.9 A5.2 5.2 0 0 1 1308.5 379.9 V488z" fill="url(#cg1)" opacity="0.92"/><path d="M1311.2 488 V472.7 A5.2 5.2 0 0 1 1321.6000000000001 472.7 V488z" fill="url(#cg2)" opacity="0.92"/><path d="M1324 488 V267.8 A5.2 5.2 0 0 1 1334.4 267.8 V488z" fill="url(#cg3)" opacity="0.92"/><path d="M1336.5 488 V349.1 A5.2 5.2 0 0 1 1346.9 349.1 V488z" fill="url(#cg4)" opacity="0.92"/><path d="M1349.3 488 V412.6 A5.2 5.2 0 0 1 1359.7 412.6 V488z" fill="url(#cg5)" opacity="0.92"/><path d="M1361.3 488 V347.7 A5.2 5.2 0 0 1 1371.7 347.7 V488z" fill="url(#cg6)" opacity="0.92"/><path d="M1374.1 488 V447 A5.2 5.2 0 0 1 1384.5 447 V488z" fill="url(#cg7)" opacity="0.92"/><path d="M1386.7 488 V420.7 A5.2 5.2 0 0 1 1397.1000000000001 420.7 V488z" fill="url(#cg8)" opacity="0.92"/><path d="M1399.5 488 V331.9 A5.2 5.2 0 0 1 1409.9 331.9 V488z" fill="url(#cg9)" opacity="0.92"/><line x1="1242.3" y1="488" x2="1452.6" y2="488" stroke="#555" stroke-width="1.3"/><circle cx="1249.5" cy="507.5" r="4.3" fill="url(#cg0)"/><circle cx="1316.3" cy="507.5" r="4.3" fill="url(#cg1)"/><circle cx="1383.1" cy="507.5" r="4.3" fill="url(#cg2)"/><circle cx="1249.5" cy="517.9" r="4.3" fill="url(#cg3)"/><circle cx="1316.3" cy="517.9" r="4.3" fill="url(#cg4)"/><circle cx="1383.1" cy="517.9" r="4.3" fill="url(#cg5)"/><circle cx="1249.5" cy="528.4" r="4.3" fill="url(#cg6)"/><circle cx="1316.3" cy="528.4" r="4.3" fill="url(#cg7)"/><circle cx="1383.1" cy="528.4" r="4.3" fill="url(#cg8)"/><circle cx="1249.5" cy="538.8" r="4.3" fill="url(#cg9)"/><line x1="1237.4" y1="693.3" x2="1452.8" y2="693.3" stroke="#dcdcdc" stroke-width="1"/><line x1="1237.4" y1="736.8" x2="1452.8" y2="736.8" stroke="#dcdcdc" stroke-width="1"/><line x1="1237.4" y1="778.4" x2="1452.8" y2="778.4" stroke="#dcdcdc" stroke-width="1"/><line x1="1237.4" y1="821.1" x2="1452.8" y2="821.1" stroke="#dcdcdc" stroke-width="1"/><line x1="1237.4" y1="863.4" x2="1452.8" y2="863.4" stroke="#dcdcdc" stroke-width="1"/><line x1="1237.4" y1="905" x2="1452.8" y2="905" stroke="#dcdcdc" stroke-width="1"/><path d="M1282.1 947.5 V901.2 A4 4 0 0 1 1286.1 897.2 H1293.1 A4 4 0 0 1 1297.1 901.2 V947.5z" fill="url(#cg0)" opacity="0.92"/><path d="M1300.6 947.5 V934.8 A4 4 0 0 1 1304.6 930.8 H1311.6 A4 4 0 0 1 1315.6 934.8 V947.5z" fill="url(#cg1)" opacity="0.92"/><path d="M1319.8 947.5 V918.1 A4 4 0 0 1 1323.8 914.1 H1330.8 A4 4 0 0 1 1334.8 918.1 V947.5z" fill="url(#cg2)" opacity="0.92"/><path d="M1338.1 947.5 V884 A4 4 0 0 1 1342.1 880 H1349.1 A4 4 0 0 1 1353.1 884 V947.5z" fill="url(#cg3)" opacity="0.92"/><path d="M1356.6 947.5 V934.8 A4 4 0 0 1 1360.6 930.8 H1367.6 A4 4 0 0 1 1371.6 934.8 V947.5z" fill="url(#cg4)" opacity="0.92"/><path d="M1374.9 947.5 V901.2 A4 4 0 0 1 1378.9 897.2 H1385.9 A4 4 0 0 1 1389.9 901.2 V947.5z" fill="url(#cg5)" opacity="0.92"/><path d="M1393.2 947.5 V749.2 A4 4 0 0 1 1397.2 745.2 H1404.2 A4 4 0 0 1 1408.2 749.2 V947.5z" fill="url(#cg6)" opacity="0.92"/><line x1="1237.4" y1="947.5" x2="1452.8" y2="947.5" stroke="#555" stroke-width="1.3"/><circle cx="1271.6" cy="966.2" r="4.3" fill="url(#cg0)"/><circle cx="1349.3" cy="966.2" r="4.3" fill="url(#cg1)"/><circle cx="1271.6" cy="976.5" r="4.3" fill="url(#cg2)"/><circle cx="1349.3" cy="976.5" r="4.3" fill="url(#cg3)"/><circle cx="1271.6" cy="987.2" r="4.3" fill="url(#cg4)"/><circle cx="1349.3" cy="987.2" r="4.3" fill="url(#cg5)"/><circle cx="1271.6" cy="997.5" r="4.3" fill="url(#cg6)"/></svg>
<div class="t" style="left:1214.65px;top:230.18px;font-size:9px;font-weight:400;color:#444;letter-spacing:0.375px;font-family:'Liberation Sans',sans-serif;-webkit-text-stroke:0.1px #444;">600</div>
<div class="t" style="left:1214.65px;top:273.88px;font-size:9px;font-weight:400;color:#444;letter-spacing:0.375px;font-family:'Liberation Sans',sans-serif;-webkit-text-stroke:0.1px #444;">500</div>
<div class="t" style="left:1214.65px;top:315.68px;font-size:9px;font-weight:400;color:#444;letter-spacing:0.375px;font-family:'Liberation Sans',sans-serif;-webkit-text-stroke:0.1px #444;">400</div>
<div class="t" style="left:1214.65px;top:357.98px;font-size:9px;font-weight:400;color:#444;letter-spacing:0.375px;font-family:'Liberation Sans',sans-serif;-webkit-text-stroke:0.1px #444;">300</div>
<div class="t" style="left:1214.65px;top:400.38px;font-size:9px;font-weight:400;color:#444;letter-spacing:0.375px;font-family:'Liberation Sans',sans-serif;-webkit-text-stroke:0.1px #444;">200</div>
<div class="t" style="left:1214.65px;top:441.98px;font-size:9px;font-weight:400;color:#444;letter-spacing:0.375px;font-family:'Liberation Sans',sans-serif;-webkit-text-stroke:0.1px #444;">100</div>
<div class="t" style="left:1225.40px;top:483.98px;font-size:9px;font-weight:400;color:#444;letter-spacing:0.000px;font-family:'Liberation Sans',sans-serif;-webkit-text-stroke:0.1px #444;">0</div>
<div class="t" style="left:1262.00px;top:503.26px;font-size:9.5px;font-weight:400;color:#3a3a3a;letter-spacing:0.000px;font-family:'Liberation Sans',sans-serif;transform:scaleX(0.9086);transform-origin:0 0;-webkit-text-stroke:0.3px #3a3a3a;">2022-36</div>
<div class="t" style="left:1328.60px;top:503.26px;font-size:9.5px;font-weight:400;color:#3a3a3a;letter-spacing:0.000px;font-family:'Liberation Sans',sans-serif;transform:scaleX(0.9086);transform-origin:0 0;-webkit-text-stroke:0.3px #3a3a3a;">2022-37</div>
<div class="t" style="left:1395.30px;top:503.26px;font-size:9.5px;font-weight:400;color:#3a3a3a;letter-spacing:0.000px;font-family:'Liberation Sans',sans-serif;transform:scaleX(0.9086);transform-origin:0 0;-webkit-text-stroke:0.3px #3a3a3a;">2022-38</div>
<div class="t" style="left:1262.00px;top:513.66px;font-size:9.5px;font-weight:400;color:#3a3a3a;letter-spacing:0.000px;font-family:'Liberation Sans',sans-serif;transform:scaleX(0.9086);transform-origin:0 0;-webkit-text-stroke:0.3px #3a3a3a;">2022-39</div>
<div class="t" style="left:1328.60px;top:513.66px;font-size:9.5px;font-weight:400;color:#3a3a3a;letter-spacing:0.000px;font-family:'Liberation Sans',sans-serif;transform:scaleX(0.9086);transform-origin:0 0;-webkit-text-stroke:0.3px #3a3a3a;">2022-40</div>
<div class="t" style="left:1395.30px;top:513.66px;font-size:9.5px;font-weight:400;color:#3a3a3a;letter-spacing:0.000px;font-family:'Liberation Sans',sans-serif;transform:scaleX(0.9086);transform-origin:0 0;-webkit-text-stroke:0.3px #3a3a3a;">2022-41</div>
<div class="t" style="left:1262.00px;top:524.16px;font-size:9.5px;font-weight:400;color:#3a3a3a;letter-spacing:0.000px;font-family:'Liberation Sans',sans-serif;transform:scaleX(0.9086);transform-origin:0 0;-webkit-text-stroke:0.3px #3a3a3a;">2022-42</div>
<div class="t" style="left:1328.60px;top:524.16px;font-size:9.5px;font-weight:400;color:#3a3a3a;letter-spacing:0.000px;font-family:'Liberation Sans',sans-serif;transform:scaleX(0.9086);transform-origin:0 0;-webkit-text-stroke:0.3px #3a3a3a;">2022-43</div>
<div class="t" style="left:1395.30px;top:524.16px;font-size:9.5px;font-weight:400;color:#3a3a3a;letter-spacing:0.000px;font-family:'Liberation Sans',sans-serif;transform:scaleX(0.9086);transform-origin:0 0;-webkit-text-stroke:0.3px #3a3a3a;">2022-44</div>
<div class="t" style="left:1262.00px;top:534.56px;font-size:9.5px;font-weight:400;color:#3a3a3a;letter-spacing:0.000px;font-family:'Liberation Sans',sans-serif;transform:scaleX(0.9086);transform-origin:0 0;-webkit-text-stroke:0.3px #3a3a3a;">2022-45</div>
<div class="t" style="left:1208.00px;top:587.70px;font-size:13px;font-weight:400;color:#161616;letter-spacing:0.230px;font-family:'Liberation Sans',sans-serif;-webkit-text-stroke:0.3px #161616;">Orders Scheduled to Ship This Week</div>
<div class="t" style="left:1209.50px;top:625.26px;font-size:9.5px;font-weight:400;color:#555;letter-spacing:0.000px;font-family:'Liberation Sans',sans-serif;transform:scaleX(0.9500);transform-origin:0 0;">DATE</div>
<div style="position:absolute;left:1209px;top:636px;width:237px;height:20px;border:1px solid #b8b8b8;box-sizing:border-box;background:#fff"></div>
<div class="t" style="left:1212.70px;top:641.31px;font-size:10.5px;font-weight:400;color:#222;letter-spacing:0.650px;font-family:'Liberation Sans',sans-serif;">All</div>
<div class="t" style="left:1207.90px;top:671.24px;font-size:10px;font-weight:400;color:#444;letter-spacing:-0.440px;font-family:'Liberation Sans',sans-serif;">TOTAL:</div>
<div class="t" style="left:1243.80px;top:671.24px;font-size:10px;font-weight:400;color:#3b5a90;letter-spacing:0.000px;font-family:'Liberation Sans',sans-serif;">7</div>
<div class="t" style="left:1215.30px;top:689.48px;font-size:9px;font-weight:400;color:#444;letter-spacing:0.500px;font-family:'Liberation Sans',sans-serif;-webkit-text-stroke:0.1px #444;">15</div>
<div class="t" style="left:1215.30px;top:732.98px;font-size:9px;font-weight:400;color:#444;letter-spacing:0.500px;font-family:'Liberation Sans',sans-serif;-webkit-text-stroke:0.1px #444;">13</div>
<div class="t" style="left:1215.30px;top:774.58px;font-size:9px;font-weight:400;color:#444;letter-spacing:0.500px;font-family:'Liberation Sans',sans-serif;-webkit-text-stroke:0.1px #444;">10</div>
<div class="t" style="left:1220.80px;top:817.28px;font-size:9px;font-weight:400;color:#444;letter-spacing:0.000px;font-family:'Liberation Sans',sans-serif;-webkit-text-stroke:0.1px #444;">8</div>
<div class="t" style="left:1220.80px;top:859.58px;font-size:9px;font-weight:400;color:#444;letter-spacing:0.000px;font-family:'Liberation Sans',sans-serif;-webkit-text-stroke:0.1px #444;">5</div>
<div class="t" style="left:1220.80px;top:901.18px;font-size:9px;font-weight:400;color:#444;letter-spacing:0.000px;font-family:'Liberation Sans',sans-serif;-webkit-text-stroke:0.1px #444;">3</div>
<div class="t" style="left:1220.80px;top:943.38px;font-size:9px;font-weight:400;color:#444;letter-spacing:0.000px;font-family:'Liberation Sans',sans-serif;-webkit-text-stroke:0.1px #444;">0</div>
<div class="t" style="left:1284.00px;top:961.96px;font-size:9.5px;font-weight:400;color:#3a3a3a;letter-spacing:0.000px;font-family:'Liberation Sans',sans-serif;transform:scaleX(0.9042);transform-origin:0 0;-webkit-text-stroke:0.3px #3a3a3a;">03/05/2023</div>
<div class="t" style="left:1361.60px;top:961.96px;font-size:9.5px;font-weight:400;color:#3a3a3a;letter-spacing:0.000px;font-family:'Liberation Sans',sans-serif;transform:scaleX(0.9042);transform-origin:0 0;-webkit-text-stroke:0.3px #3a3a3a;">03/06/2023</div>
<div class="t" style="left:1284.00px;top:972.26px;font-size:9.5px;font-weight:400;color:#3a3a3a;letter-spacing:0.000px;font-family:'Liberation Sans',sans-serif;transform:scaleX(0.9042);transform-origin:0 0;-webkit-text-stroke:0.3px #3a3a3a;">03/07/2023</div>
<div class="t" style="left:1361.60px;top:972.26px;font-size:9.5px;font-weight:400;color:#3a3a3a;letter-spacing:0.000px;font-family:'Liberation Sans',sans-serif;transform:scaleX(0.9042);transform-origin:0 0;-webkit-text-stroke:0.3px #3a3a3a;">03/08/2023</div>
<div class="t" style="left:1284.00px;top:982.96px;font-size:9.5px;font-weight:400;color:#3a3a3a;letter-spacing:0.000px;font-family:'Liberation Sans',sans-serif;transform:scaleX(0.9042);transform-origin:0 0;-webkit-text-stroke:0.3px #3a3a3a;">03/09/2023</div>
<div class="t" style="left:1361.60px;top:982.96px;font-size:9.5px;font-weight:400;color:#3a3a3a;letter-spacing:0.000px;font-family:'Liberation Sans',sans-serif;transform:scaleX(0.9042);transform-origin:0 0;-webkit-text-stroke:0.3px #3a3a3a;">03/10/2023</div>
<div class="t" style="left:1284.00px;top:993.26px;font-size:9.5px;font-weight:400;color:#3a3a3a;letter-spacing:0.000px;font-family:'Liberation Sans',sans-serif;transform:scaleX(0.9234);transform-origin:0 0;-webkit-text-stroke:0.3px #3a3a3a;">03/11/2023</div>
</body></html>
